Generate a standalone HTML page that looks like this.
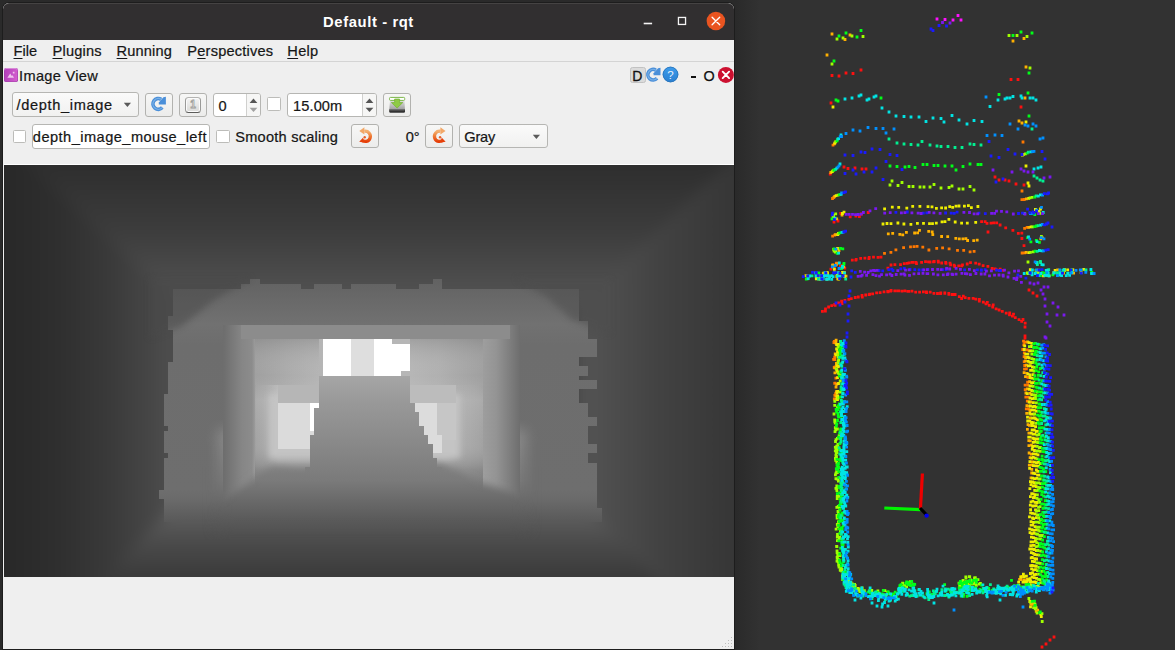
<!DOCTYPE html>
<html lang="en">
<head>
<meta charset="utf-8">
<title>Default - rqt</title>
<style>
*{box-sizing:border-box;margin:0;padding:0}
html,body{width:1175px;height:650px;overflow:hidden;background:#323232}
body{position:relative;font-family:"Liberation Sans",sans-serif;font-size:14.6px;color:#161616;-webkit-text-stroke:0.22px #161616}
.abs{position:absolute}
#desk{position:absolute;left:0;top:0;width:1175px;height:650px;background:#323232;overflow:hidden}
#shadow{position:absolute;left:0;top:0;width:760px;height:650px;background:linear-gradient(90deg,#2a2a2a 0,#2a2a2a 736px,#2d2d2d 745px,#323232 760px)}
#win{position:absolute;left:3px;top:3px;width:731px;height:646px;background:#efefef;border-radius:6px 6px 0 0;overflow:hidden;box-shadow:0 0 0 1px #1d1d1d}
#title{position:absolute;left:0;top:0;width:731px;height:37px;background:#312f30;border-top:1px solid #454343;border-radius:6px 6px 0 0}
#title .t{position:absolute;left:0;width:731px;top:9px;text-align:center;color:#fff;font-weight:bold;font-size:14.8px;line-height:18px;white-space:nowrap;letter-spacing:.6px;-webkit-text-stroke:0}
#menubar{position:absolute;left:0;top:37px;width:731px;height:22px;background:#efefef;border-bottom:1px solid #d4d4d4}
.mi{position:absolute;top:3px;line-height:17px;white-space:nowrap}
.mi u{text-decoration:underline;text-underline-offset:2px;text-decoration-thickness:1.4px}
.lbl{position:absolute;white-space:nowrap;line-height:18px}
.btn{position:absolute;border:1px solid #b2b2af;border-radius:3px;background:linear-gradient(#f7f7f6,#ececeb)}
.field{position:absolute;border:1px solid #b6b6b3;border-radius:3px;background:#fff}
.chk{position:absolute;width:13.6px;height:13.4px;border:1px solid #bcbcb9;border-radius:1.5px;background:#fff}
svg{position:absolute;display:block}
</style>
</head>
<body>
<div id="desk">
<div id="shadow"></div>
<div id="win">
 <div id="title"><div class="t">Default - rqt</div>
  <svg style="left:636px;top:6px" width="92" height="24" viewBox="0 0 92 24">
   <rect x="4.7" y="12.7" width="8.4" height="1.6" fill="#f4f4f4"/>
   <rect x="39.45" y="7.45" width="7.1" height="7" fill="none" stroke="#f4f4f4" stroke-width="1.3"/>
   <circle cx="76.9" cy="11" r="9.3" fill="#e95420"/>
   <path d="M73.1 7.2 L80.7 14.8 M80.7 7.2 L73.1 14.8" stroke="#fff" stroke-width="1.35" stroke-linecap="round"/>
  </svg>
 </div>
 <div id="menubar">
  <span class="mi" style="left:10.50px;letter-spacing:0.064px"><u>F</u>ile</span>
  <span class="mi" style="left:49.50px;letter-spacing:0.206px"><u>P</u>lugins</span>
  <span class="mi" style="left:113.60px;letter-spacing:0.149px"><u>R</u>unning</span>
  <span class="mi" style="left:184.30px;letter-spacing:0.206px">P<u>e</u>rspectives</span>
  <span class="mi" style="left:284.30px;letter-spacing:0.303px"><u>H</u>elp</span>
 </div>
 <!-- dock title -->
 <div class="abs" style="left:.7px;top:65.3px;width:14.6px;height:13.4px;border-radius:2.5px;background:linear-gradient(100deg,#b03cba,#c24fc4 50%,#d862d0);box-shadow:inset 0 1px 0 #d88ad8,inset 0 0 0 .6px #a040a8"></div>
 <svg style="left:1px;top:65px" width="14" height="14" viewBox="0 0 14 14"><path d="M3.4 9.8 L6.2 5.4 L7.8 8 L8.6 7.2 L10 9.8Z" fill="#efc4ee"/><rect x="8.8" y="3.8" width="1.7" height="1.7" fill="#efc4ee"/></svg>
 <span class="lbl" style="left:16.10px;top:64px;letter-spacing:0.305px">Image View</span>
 <!-- dock buttons -->
 <div class="abs" style="left:627.3px;top:64.3px;width:15.3px;height:15.4px;background:#dbdbdb;border:1px solid #c2c2c2;border-radius:2.5px"></div>
 <span class="lbl" style="left:629.2px;top:63.6px;font-size:14px;-webkit-text-stroke:.3px #111;color:#111">D</span>
 <svg style="left:641px;top:62.6px" width="17" height="17" viewBox="4 2 17.4 17.4"><path d="M16.2 6.3 A5.4 5.4 0 1 0 17.3 14.6" fill="none" stroke="#4a8fd9" stroke-width="3.7"/><path d="M16.2 6.3 A5.4 5.4 0 1 0 17.3 14.6" fill="none" stroke="#79b0e6" stroke-width="1.3"/><path d="M20.9 3.8 V11.4 H13.8 V9.4 L18.4 4.2 Z" fill="#4a8fd9"/></svg>
 <svg style="left:658.6px;top:63.4px" width="17" height="17" viewBox="0 0 17 17"><defs><linearGradient id="qg" x1="0" y1="0" x2="0" y2="1"><stop offset="0" stop-color="#3d9ceb"/><stop offset="1" stop-color="#2a80d2"/></linearGradient></defs><circle cx="8.5" cy="8.5" r="7.8" fill="url(#qg)"/><circle cx="8.5" cy="8.5" r="7.4" fill="none" stroke="#2c73b8" stroke-width=".8"/><text x="8.5" y="12.8" font-size="11.5" text-anchor="middle" fill="#e8f2fc" font-family="Liberation Sans, sans-serif">?</text></svg>
 <div class="abs" style="left:688.2px;top:72.9px;width:5.1px;height:2.1px;background:#111"></div>
 <span class="lbl" style="left:700.6px;top:63.7px;font-size:14.4px;color:#111;-webkit-text-stroke:.25px #111">O</span>
 <svg style="left:714px;top:63px" width="18" height="18" viewBox="0 0 18 18"><circle cx="8.9" cy="8.9" r="8" fill="#cc1030"/><path d="M5.7 5.7 L12.1 12.1 M12.1 5.7 L5.7 12.1" stroke="#fff" stroke-width="1.9" stroke-linecap="round"/></svg>
 <!-- row 1 -->
 <div class="field" style="left:9.2px;top:89px;width:126.6px;height:24.6px;background:linear-gradient(#fafafa,#f1f1f0)"></div>
 <span class="lbl" style="left:13.60px;top:92.6px;letter-spacing:0.654px">/depth_image</span>
 <svg style="left:120px;top:99px" width="9" height="6" viewBox="0 0 9 6"><path d="M.8 .8 L8 .8 L4.4 5Z" fill="#5a5a5a"/></svg>
 <div class="btn" style="left:142.2px;top:90px;width:27.6px;height:23.7px"></div>
 <svg style="left:142px;top:90px" width="28" height="24" viewBox="0 0 28 24"><defs><linearGradient id="rb" x1="0" y1="0" x2="0" y2="1"><stop offset="0" stop-color="#7db3e8"/><stop offset="1" stop-color="#3f86d2"/></linearGradient></defs><path d="M16.2 6.3 A5.4 5.4 0 1 0 17.3 14.6" fill="none" stroke="#4a8fd9" stroke-width="3.7"/><path d="M16.2 6.3 A5.4 5.4 0 1 0 17.3 14.6" fill="none" stroke="#79b0e6" stroke-width="1.3"/><path d="M20.9 3.8 V11.4 H13.8 V9.4 L18.4 4.2 Z" fill="#4a8fd9"/></svg>
 <div class="btn" style="left:176px;top:90px;width:27.6px;height:23.7px"></div>
 <div class="abs" style="left:182.2px;top:94.2px;width:15.8px;height:15.6px;border:1px solid #9a9a98;border-bottom-color:#5c5c5a;border-top-color:#b4b4b2;border-radius:3.5px;background:linear-gradient(#f4f4f4,#dadad8);box-shadow:inset 0 0 0 1px #fbfbfb"></div>
 <span class="lbl" style="left:187.3px;top:95.4px;font-size:10px;font-weight:bold;line-height:13px;color:#fff;-webkit-text-stroke:.8px #9c9c98">1</span>
 <div class="field" style="left:210.2px;top:89.8px;width:47.6px;height:24px"></div>
 <div class="abs" style="left:243.4px;top:90.8px;width:13.4px;height:22px;border-left:1px solid #d0d0ce;background:#f6f6f5;border-radius:0 2px 2px 0"></div>
 <svg style="left:245.5px;top:94px" width="9" height="16" viewBox="0 0 9 16"><path d="M.6 6 L4.5 1.6 L8.4 6Z" fill="#555"/><path d="M.6 10.7 L4.5 15 L8.4 10.7Z" fill="#a0a0a0"/></svg>
 <span class="lbl" style="left:215.60px;top:94px">0</span>
 <div class="chk" style="left:264px;top:94.3px"></div>
 <div class="field" style="left:284.2px;top:89.8px;width:89.4px;height:24px"></div>
 <div class="abs" style="left:359.4px;top:90.8px;width:13.2px;height:22px;border-left:1px solid #d0d0ce;background:#f6f6f5;border-radius:0 2px 2px 0"></div>
 <svg style="left:361.5px;top:94px" width="9" height="16" viewBox="0 0 9 16"><path d="M.6 6 L4.5 1.6 L8.4 6Z" fill="#555"/><path d="M.6 10.7 L4.5 15 L8.4 10.7Z" fill="#555"/></svg>
 <span class="lbl" style="left:290.00px;top:94px;letter-spacing:0.114px">15.00m</span>
 <div class="btn" style="left:380.2px;top:90px;width:27.5px;height:23.7px"></div>
 <svg style="left:380px;top:90px" width="28" height="24" viewBox="383 93 28 24"><defs><linearGradient id="sv" x1="0" y1="0" x2="0" y2="1"><stop offset="0" stop-color="#e2e2e2"/><stop offset="1" stop-color="#9c9c9c"/></linearGradient></defs><path d="M390 100.4 H404.4 L405 110 H389.2Z" fill="url(#sv)"/><rect x="389.5" y="97.4" width="15.2" height="3" rx="1" fill="#fff" stroke="#7ab648" stroke-width="1"/><path d="M394.6 99 H399.6 V102.6 H402.8 L397.1 108 L391.4 102.6 H394.6Z" fill="#8fca45" stroke="#74b033" stroke-width=".7"/><path d="M389.2 109.6 H405 V111.6 Q405 112.8 403.8 112.8 H390.4 Q389.2 112.8 389.2 111.6Z" fill="#333"/><rect x="389.6" y="109.6" width="15" height=".8" fill="#777"/></svg>
 <!-- row 2 -->
 <div class="chk" style="left:9.6px;top:126.6px"></div>
 <div class="field" style="left:29.1px;top:121.4px;width:177.8px;height:24.2px"></div>
 <span class="lbl" style="left:29.80px;top:124.6px;letter-spacing:0.468px">depth_image_mouse_left</span>
 <div class="chk" style="left:213.3px;top:126.7px"></div>
 <span class="lbl" style="left:232.30px;top:124.9px;letter-spacing:0.212px">Smooth scaling</span>
 <div class="btn" style="left:348.3px;top:121.4px;width:27.5px;height:23.3px"></div>
 <svg style="left:348.4px;top:121.4px" width="28" height="24" viewBox="0 0 28 24"><defs><linearGradient id="roL" x1="0" y1="0" x2="0" y2="1"><stop offset="0" stop-color="#f3b070"/><stop offset=".5" stop-color="#ee7a34"/><stop offset="1" stop-color="#e6400a"/></linearGradient></defs><path d="M13.4 7.3 A5.1 5.1 0 1 1 10.6 15.9" fill="none" stroke="url(#roL)" stroke-width="3.3"/><path d="M13.4 3.2 L13.4 10.6 L8.3 6.9 Z" fill="#f2a868"/><path d="M8.2 17.8 L12.2 13.6 L12.6 18.4 Z" fill="#e6400a"/><circle cx="13.7" cy="13.2" r="1.2" fill="#e8602a"/></svg>
 <span class="lbl" style="left:402.70px;top:124.9px;letter-spacing:-0.050px">0°</span>
 <div class="btn" style="left:422.4px;top:121.4px;width:27.5px;height:23.3px"></div>
 <svg style="left:422.5px;top:121.4px" width="28" height="24" viewBox="0 0 28 24"><g transform="translate(27.8,0) scale(-1,1)"><defs><linearGradient id="roR" x1="0" y1="0" x2="0" y2="1"><stop offset="0" stop-color="#f3b070"/><stop offset=".5" stop-color="#ee7a34"/><stop offset="1" stop-color="#e6400a"/></linearGradient></defs><path d="M13.4 7.3 A5.1 5.1 0 1 1 10.6 15.9" fill="none" stroke="url(#roR)" stroke-width="3.3"/><path d="M13.4 3.2 L13.4 10.6 L8.3 6.9 Z" fill="#f2a868"/><path d="M8.2 17.8 L12.2 13.6 L12.6 18.4 Z" fill="#e6400a"/><circle cx="13.7" cy="13.2" r="1.2" fill="#e8602a"/></g></svg>
 <div class="field" style="left:456.2px;top:120.7px;width:88.6px;height:24.6px;background:linear-gradient(#fafafa,#f1f1f0)"></div>
 <span class="lbl" style="left:461.30px;top:124.8px;letter-spacing:-0.206px">Gray</span>
 <svg style="left:529px;top:131px" width="9" height="6" viewBox="0 0 9 6"><path d="M.8 .8 L8 .8 L4.4 5Z" fill="#5a5a5a"/></svg>
 <!-- image area -->
 <div class="abs" style="left:1px;top:161px;width:730px;height:1px;background:#fff"></div>
 <svg style="left:1px;top:162px" width="730" height="412" viewBox="4 165 730 412" shape-rendering="crispEdges">
<defs>
<linearGradient id="gT" gradientUnits="userSpaceOnUse" x1="0" y1="165" x2="0" y2="290"><stop offset="0" stop-color="#2e2e2e"/><stop offset="0.52" stop-color="#3c3c3c"/><stop offset="1" stop-color="#505050"/></linearGradient>
<linearGradient id="gL" gradientUnits="userSpaceOnUse" x1="4" y1="0" x2="168" y2="0"><stop offset="0" stop-color="#282828"/><stop offset="0.341463" stop-color="#2f2f2f"/><stop offset="0.646341" stop-color="#3a3a3a"/><stop offset="0.890244" stop-color="#464646"/><stop offset="1" stop-color="#4d4d4d"/></linearGradient>
<linearGradient id="gR" gradientUnits="userSpaceOnUse" x1="592" y1="0" x2="734" y2="0"><stop offset="0" stop-color="#525252"/><stop offset="0.478873" stop-color="#424242"/><stop offset="1" stop-color="#363636"/></linearGradient>
<linearGradient id="gF" gradientUnits="userSpaceOnUse" x1="0" y1="376" x2="0" y2="577"><stop offset="0" stop-color="#a6a6a6"/><stop offset="0.139303" stop-color="#989898"/><stop offset="0.318408" stop-color="#8a8a8a"/><stop offset="0.522388" stop-color="#7a7a7a"/><stop offset="0.616915" stop-color="#6a6a6a"/><stop offset="0.716418" stop-color="#5a5a5a"/><stop offset="0.81592" stop-color="#4c4c4c"/><stop offset="1" stop-color="#3a3a3a"/></linearGradient>
<linearGradient id="gM" gradientUnits="userSpaceOnUse" x1="0" y1="280" x2="0" y2="540"><stop offset="0" stop-color="#626262"/><stop offset="0.0769231" stop-color="#696969"/><stop offset="0.169231" stop-color="#717171"/><stop offset="0.25" stop-color="#6d6d6d"/><stop offset="0.807692" stop-color="#6e6e6e"/><stop offset="0.846154" stop-color="#6a6a6a"/><stop offset="0.923077" stop-color="#5a5a5a"/><stop offset="1" stop-color="#4c4c4c"/></linearGradient>
<linearGradient id="gWL" gradientUnits="userSpaceOnUse" x1="224" y1="0" x2="320" y2="0"><stop offset="0" stop-color="#6e6e6e"/><stop offset="0.1875" stop-color="#868686"/><stop offset="0.291667" stop-color="#8c8c8c"/><stop offset="0.333333" stop-color="#a0a0a0"/><stop offset="0.4375" stop-color="#a8a8a8"/><stop offset="0.572917" stop-color="#bababa"/><stop offset="1" stop-color="#bababa"/></linearGradient>
<linearGradient id="gWR" gradientUnits="userSpaceOnUse" x1="412" y1="0" x2="520" y2="0"><stop offset="0" stop-color="#bebebe"/><stop offset="0.305556" stop-color="#bebebe"/><stop offset="0.407407" stop-color="#acacac"/><stop offset="0.537037" stop-color="#a6a6a6"/><stop offset="0.62963" stop-color="#a0a0a0"/><stop offset="0.777778" stop-color="#949494"/><stop offset="1" stop-color="#6e6e6e"/></linearGradient>
<linearGradient id="gVs" gradientUnits="userSpaceOnUse" x1="0" y1="339" x2="0" y2="490"><stop offset="0" stop-color="#787878" stop-opacity="0.35"/><stop offset="0.238411" stop-color="#c8c8c8" stop-opacity="0"/><stop offset="0.403974" stop-color="#d2d2d2" stop-opacity="0.25"/><stop offset="0.668874" stop-color="#c8c8c8" stop-opacity="0.1"/><stop offset="0.86755" stop-color="#6e6e6e" stop-opacity="0.45"/><stop offset="1" stop-color="#646464" stop-opacity="0.7"/></linearGradient>
<filter id="b6" color-interpolation-filters="sRGB" x="-10%" y="-10%" width="120%" height="120%"><feGaussianBlur stdDeviation="7"/></filter>
<filter id="b3" color-interpolation-filters="sRGB" x="-10%" y="-10%" width="120%" height="120%"><feGaussianBlur stdDeviation="3"/></filter>
<clipPath id="cp"><rect x="4" y="165" width="730" height="412"/></clipPath>
<filter id="b8" color-interpolation-filters="sRGB" x="-10%" y="-10%" width="120%" height="120%"><feGaussianBlur stdDeviation="7"/></filter>
<filter id="b4" color-interpolation-filters="sRGB" x="-10%" y="-10%" width="120%" height="120%"><feGaussianBlur stdDeviation="3.5"/></filter>
<mask id="mW" maskUnits="userSpaceOnUse" x="0" y="100" width="800" height="600"><polygon filter="url(#b4)" fill="#fff" points="100,200 660,200 660,540 600,530 523,496 501,488 477,481 443,463 306,467 272,466 257,475 246,484 224,498 160,530 100,540"/></mask>
<mask id="mF" maskUnits="userSpaceOnUse" x="0" y="100" width="800" height="600"><polygon filter="url(#b8)" fill="#fff" points="218,430 526,430 526,530 218,530"/></mask>
</defs>
<g clip-path="url(#cp)">
<rect x="4" y="165" width="730" height="412" fill="#3c3c3c"/>
<g filter="url(#b6)">
<polygon points="-60,84 820,75 575,309 185,308" fill="url(#gT)"/>
<polygon points="-60,84 185,308 185,494 -60,750" fill="url(#gL)"/>
<polygon points="820,75 575,309 575,494 820,750" fill="url(#gR)"/>
<polygon points="-60,750 185,494 575,494 820,750" fill="url(#gF)"/>
</g>
<polygon points="172.81,288.6 241.25,288.6 241.25,284.02 250.38,284.02 250.38,279.44 259.5,279.44 259.5,284.02 300.56,284.02 300.56,288.6 314.25,288.6 314.25,284.02 341.62,284.02 341.62,288.6 350.75,288.6 350.75,284.02 396.38,284.02 396.38,288.6 419.19,288.6 419.19,284.02 432.88,284.02 432.88,279.44 442,279.44 442,288.6 578.88,288.6 578.88,288.6 578.88,320.64 588,320.64 588,338.96 597.12,338.96 597.12,357.27 578.88,357.27 578.88,366.42 588,366.42 588,375.58 578.88,375.58 578.88,380.16 597.12,380.16 597.12,389.31 578.88,389.31 578.88,403.04 588,403.04 588,416.78 597.12,416.78 597.12,425.93 588,425.93 588,430.51 588,430.51 588,444.24 597.12,444.24 597.12,453.4 588,453.4 588,462.56 597.12,462.56 597.12,508.33 601.69,508.33 601.69,522.07 163.69,522.07 163.69,499.18 159.12,499.18 159.12,490.02 163.69,490.02 163.69,457.98 168.25,457.98 168.25,453.4 163.69,453.4 163.69,430.51 168.25,430.51 168.25,425.93 163.69,425.93 163.69,393.89 168.25,393.89 168.25,361.84 172.81,361.84 172.81,329.8 168.25,329.8 168.25,316.07 172.81,316.07 172.81,288.6" fill="url(#gM)"/>
<rect x="150" y="375.58" width="460.81" height="164.8" fill="url(#gF)" mask="url(#mF)"/>
<g mask="url(#mW)">
<g filter="url(#b3)" opacity=".55"><polygon points="150,278 252,278 214,300 182,326 150,338" fill="#4a4a4a"/><polygon points="515,278 610,278 610,334 572,320 548,298" fill="#4e4e4e"/></g>
<rect x="223" y="325.22" width="95.81" height="219.74" fill="url(#gWL)"/>
<rect x="410.06" y="325.22" width="109.5" height="219.74" fill="url(#gWR)"/>
<rect x="241.25" y="325.22" width="269.19" height="13.74" fill="#8c8c8c"/>
<rect x="254.94" y="338.96" width="228.12" height="45.77" fill="#a8a8a8"/>
<linearGradient id="gC3" gradientUnits="userSpaceOnUse" x1="256" y1="0" x2="481" y2="0"><stop offset="0" stop-color="#a0a0a0"/><stop offset="0.151111" stop-color="#acacac"/><stop offset="0.306667" stop-color="#b6b6b6"/><stop offset="0.693333" stop-color="#b6b6b6"/><stop offset="0.817778" stop-color="#b0b0b0"/><stop offset="1" stop-color="#a0a0a0"/></linearGradient>
<rect x="254.94" y="338.96" width="228.12" height="45.77" fill="url(#gC3)"/>
<rect x="254.94" y="338.96" width="63.87" height="206" fill="url(#gVs)"/>
<rect x="410.06" y="338.96" width="73" height="206" fill="url(#gVs)"/>
</g>
<g filter="url(#b3)">
<rect x="268.62" y="393.89" width="59.32" height="64.09" fill="#c4c4c4"/>
<rect x="405.5" y="393.89" width="54.75" height="64.09" fill="#c4c4c4"/>
</g>
<rect x="277.75" y="384.73" width="41.06" height="18.31" fill="#b6b6b6"/>
<rect x="410.06" y="384.73" width="45.63" height="18.31" fill="#bcbcbc"/>
<rect x="277.75" y="403.04" width="41.06" height="45.78" fill="#dbdbdb"/>
<rect x="309.69" y="403.04" width="9.12" height="27.47" fill="#fff"/>
<rect x="309.69" y="435.09" width="4.56" height="4.58" fill="#fff"/>
<rect x="437.44" y="403.04" width="18.25" height="36.63" fill="#c6c6c6"/>
<rect x="410.06" y="403.04" width="27.38" height="50.36" fill="#dcdcdc"/>
<rect x="437.44" y="435.09" width="4.56" height="18.31" fill="#dcdcdc"/>
<polygon points="318.81,375.58 410.06,375.58 410.06,403.04 414.62,403.04 414.62,412.2 419.19,412.2 419.19,425.93 423.75,425.93 423.75,435.09 428.31,435.09 428.31,444.24 432.88,444.24 432.88,457.98 437.44,457.98 437.44,467.13 442,467.13 442,480.87 305.12,480.87 305.12,467.13 309.69,467.13 309.69,435.09 314.25,435.09 314.25,407.62 318.81,407.62" fill="url(#gF)"/>
<polygon points="323.38,338.96 391.81,338.96 391.81,343.53 410.06,343.53 410.06,352.69 410.06,352.69 410.06,371 400.94,371 400.94,375.58 323.38,375.58" fill="#fff"/>
<rect x="350.75" y="338.96" width="22.81" height="36.62" fill="#dedede"/>
</g></svg>
 <!-- size grip -->
 <svg style="left:718px;top:633px" width="13" height="13" viewBox="0 0 13 13"><g fill="#bdbdbd"><rect x="10" y="1" width="1" height="1"/><rect x="7" y="4" width="1" height="1"/><rect x="10" y="4" width="1" height="1"/><rect x="4" y="7" width="1" height="1"/><rect x="7" y="7" width="1" height="1"/><rect x="10" y="7" width="1" height="1"/><rect x="1" y="10" width="1" height="1"/><rect x="4" y="10" width="1" height="1"/><rect x="7" y="10" width="1" height="1"/><rect x="10" y="10" width="1" height="1"/></g></svg>
</div>
<svg style="left:760px;top:0" width="415" height="650" viewBox="760 0 415 650">
<path fill="#ff1010" d="M830.6 74.1h2.8v2.8h-2.8zM837.6 74.6h2.8v2.8h-2.8zM844.6 71.6h2.8v2.8h-2.8zM851.6 72.1h2.8v2.8h-2.8zM859.6 68.6h2.8v2.8h-2.8zM1009.6 78.1h2.8v2.8h-2.8zM1016.6 78.1h2.8v2.8h-2.8zM829.6 101.6h2.8v2.8h-2.8zM1019.6 105.6h2.8v2.8h-2.8zM842.6 165.6h2.8v2.8h-2.8zM846.6 167.1h2.8v2.8h-2.8zM853.6 166.6h2.8v2.8h-2.8zM860.6 167.6h2.8v2.8h-2.8zM864.6 167.6h2.8v2.8h-2.8zM828.8 172.7h2.8v2.8h-2.8zM839.3 211.9h2.8v2.8h-2.8zM841.5 265.8h2.8v2.8h-2.8zM841.1 264.1h2.8v2.8h-2.8zM993.6 175.6h2.8v2.8h-2.8zM997.6 178.6h2.8v2.8h-2.8zM1003.6 178.6h2.8v2.8h-2.8zM1007.6 179.6h2.8v2.8h-2.8zM1014.6 182.6h2.8v2.8h-2.8zM1022.6 183.6h2.8v2.8h-2.8zM848.8 215.5h2.8v2.8h-2.8zM854.5 214.8h2.8v2.8h-2.8zM858.0 215.3h2.8v2.8h-2.8zM860.1 212.6h2.8v2.8h-2.8zM866.8 211.1h2.8v2.8h-2.8zM832.6 220.6h2.8v2.8h-2.8zM836.6 219.6h2.8v2.8h-2.8zM850.9 258.7h2.8v2.8h-2.8zM854.4 258.7h2.8v2.8h-2.8zM854.8 258.0h2.8v2.8h-2.8zM859.3 257.0h2.8v2.8h-2.8zM863.5 256.8h2.8v2.8h-2.8zM867.5 257.3h2.8v2.8h-2.8zM867.8 256.1h2.8v2.8h-2.8zM872.1 255.7h2.8v2.8h-2.8zM876.6 256.0h2.8v2.8h-2.8zM879.6 255.8h2.8v2.8h-2.8zM886.5 266.8h2.8v2.8h-2.8zM889.6 263.6h2.8v2.8h-2.8zM893.5 263.2h2.8v2.8h-2.8zM899.1 263.2h2.8v2.8h-2.8zM902.8 262.3h2.8v2.8h-2.8zM905.8 261.9h2.8v2.8h-2.8zM907.6 261.4h2.8v2.8h-2.8zM910.6 260.9h2.8v2.8h-2.8zM911.6 261.0h2.8v2.8h-2.8zM914.6 261.0h2.8v2.8h-2.8zM915.1 262.3h2.8v2.8h-2.8zM920.2 260.9h2.8v2.8h-2.8zM924.1 260.3h2.8v2.8h-2.8zM927.1 260.4h2.8v2.8h-2.8zM928.6 260.6h2.8v2.8h-2.8zM932.1 260.5h2.8v2.8h-2.8zM932.8 260.1h2.8v2.8h-2.8zM936.8 259.8h2.8v2.8h-2.8zM937.0 260.8h2.8v2.8h-2.8zM940.3 261.6h2.8v2.8h-2.8zM944.3 261.1h2.8v2.8h-2.8zM944.6 262.0h2.8v2.8h-2.8zM948.6 261.7h2.8v2.8h-2.8zM949.2 263.4h2.8v2.8h-2.8zM952.7 263.7h2.8v2.8h-2.8zM953.4 265.1h2.8v2.8h-2.8zM957.3 264.5h2.8v2.8h-2.8zM960.3 264.5h2.8v2.8h-2.8zM961.1 263.5h2.8v2.8h-2.8zM965.8 262.6h2.8v2.8h-2.8zM969.1 261.3h2.8v2.8h-2.8zM974.3 261.8h2.8v2.8h-2.8zM977.8 262.7h2.8v2.8h-2.8zM981.7 264.2h2.8v2.8h-2.8zM986.5 264.9h2.8v2.8h-2.8zM990.7 267.1h2.8v2.8h-2.8zM993.7 267.4h2.8v2.8h-2.8zM994.8 268.2h2.8v2.8h-2.8zM998.8 267.8h2.8v2.8h-2.8zM998.1 269.1h2.8v2.8h-2.8zM1001.6 268.9h2.8v2.8h-2.8zM980.2 220.2h2.8v2.8h-2.8zM983.7 220.2h2.8v2.8h-2.8zM985.6 222.0h2.8v2.8h-2.8zM989.6 221.8h2.8v2.8h-2.8zM992.3 221.4h2.8v2.8h-2.8zM995.3 221.5h2.8v2.8h-2.8zM998.7 223.6h2.8v2.8h-2.8zM1004.3 226.4h2.8v2.8h-2.8zM1011.5 228.9h2.8v2.8h-2.8zM1016.9 232.0h2.8v2.8h-2.8zM1020.4 231.7h2.8v2.8h-2.8zM1020.5 237.1h2.8v2.8h-2.8zM1022.6 244.2h2.8v2.8h-2.8zM986.6 230.6h2.8v2.8h-2.8zM839.0 264.6h2.8v2.8h-2.8zM833.2 267.0h2.8v2.8h-2.8zM829.5 267.7h2.8v2.8h-2.8zM843.4 266.7h2.8v2.8h-2.8zM821.0 310.0h2.8v2.8h-2.8zM824.0 309.6h2.8v2.8h-2.8zM824.1 307.4h2.8v2.8h-2.8zM827.2 305.6h2.8v2.8h-2.8zM830.3 304.3h2.8v2.8h-2.8zM833.8 303.9h2.8v2.8h-2.8zM833.3 303.1h2.8v2.8h-2.8zM837.1 301.5h2.8v2.8h-2.8zM840.6 302.1h2.8v2.8h-2.8zM840.2 299.8h2.8v2.8h-2.8zM843.5 299.1h2.8v2.8h-2.8zM847.4 298.0h2.8v2.8h-2.8zM849.9 297.2h2.8v2.8h-2.8zM853.8 296.1h2.8v2.8h-2.8zM856.9 295.6h2.8v2.8h-2.8zM860.9 295.7h2.8v2.8h-2.8zM860.6 293.9h2.8v2.8h-2.8zM864.3 293.6h2.8v2.8h-2.8zM867.8 293.2h2.8v2.8h-2.8zM868.3 292.8h2.8v2.8h-2.8zM871.3 292.4h2.8v2.8h-2.8zM875.2 291.5h2.8v2.8h-2.8zM878.7 291.3h2.8v2.8h-2.8zM882.6 290.5h2.8v2.8h-2.8zM886.6 290.5h2.8v2.8h-2.8zM886.3 290.0h2.8v2.8h-2.8zM889.3 289.7h2.8v2.8h-2.8zM889.7 289.1h2.8v2.8h-2.8zM893.4 289.5h2.8v2.8h-2.8zM897.4 289.5h2.8v2.8h-2.8zM896.3 289.5h2.8v2.8h-2.8zM900.6 289.8h2.8v2.8h-2.8zM903.5 289.4h2.8v2.8h-2.8zM906.5 290.0h2.8v2.8h-2.8zM907.4 290.0h2.8v2.8h-2.8zM910.6 289.7h2.8v2.8h-2.8zM914.3 290.8h2.8v2.8h-2.8zM918.2 290.8h2.8v2.8h-2.8zM922.0 290.5h2.8v2.8h-2.8zM925.0 290.5h2.8v2.8h-2.8zM925.2 291.3h2.8v2.8h-2.8zM928.8 290.8h2.8v2.8h-2.8zM932.5 291.9h2.8v2.8h-2.8zM936.1 292.1h2.8v2.8h-2.8zM939.1 292.1h2.8v2.8h-2.8zM939.4 291.6h2.8v2.8h-2.8zM943.4 291.5h2.8v2.8h-2.8zM943.4 291.9h2.8v2.8h-2.8zM947.4 291.9h2.8v2.8h-2.8zM947.5 293.0h2.8v2.8h-2.8zM951.0 293.0h2.8v2.8h-2.8zM950.8 293.3h2.8v2.8h-2.8zM953.7 293.1h2.8v2.8h-2.8zM957.9 295.2h2.8v2.8h-2.8zM961.9 294.7h2.8v2.8h-2.8zM960.2 297.1h2.8v2.8h-2.8zM963.8 296.2h2.8v2.8h-2.8zM967.5 296.9h2.8v2.8h-2.8zM971.7 296.9h2.8v2.8h-2.8zM974.5 297.7h2.8v2.8h-2.8zM978.0 298.0h2.8v2.8h-2.8zM977.9 299.7h2.8v2.8h-2.8zM981.9 300.8h2.8v2.8h-2.8zM985.9 300.9h2.8v2.8h-2.8zM984.6 302.4h2.8v2.8h-2.8zM987.8 303.9h2.8v2.8h-2.8zM991.8 303.4h2.8v2.8h-2.8zM991.3 305.6h2.8v2.8h-2.8zM994.7 307.5h2.8v2.8h-2.8zM997.7 308.6h2.8v2.8h-2.8zM1000.9 309.9h2.8v2.8h-2.8zM1004.8 311.8h2.8v2.8h-2.8zM1008.3 311.4h2.8v2.8h-2.8zM1008.1 313.4h2.8v2.8h-2.8zM1012.1 312.8h2.8v2.8h-2.8zM1011.0 314.8h2.8v2.8h-2.8zM1013.9 316.3h2.8v2.8h-2.8zM1017.6 318.3h2.8v2.8h-2.8zM1021.6 318.1h2.8v2.8h-2.8zM1020.3 319.9h2.8v2.8h-2.8zM1023.8 321.7h2.8v2.8h-2.8zM1023.6 325.6h2.8v2.8h-2.8zM1023.6 334.6h2.8v2.8h-2.8zM1027.6 288.6h2.8v2.8h-2.8zM1031.6 291.6h2.8v2.8h-2.8zM1035.6 294.6h2.8v2.8h-2.8zM1023.6 336.6h2.8v2.8h-2.8zM1040.6 645.6h2.8v2.8h-2.8zM1044.6 642.6h2.8v2.8h-2.8zM1048.6 638.6h2.8v2.8h-2.8zM1052.6 635.6h2.8v2.8h-2.8z"/>
<path fill="#ff7800" d="M831.6 143.7h2.8v2.8h-2.8zM831.1 197.1h2.8v2.8h-2.8zM832.4 196.1h2.8v2.8h-2.8zM831.2 234.7h2.8v2.8h-2.8zM833.3 233.8h2.8v2.8h-2.8zM831.6 264.4h2.8v2.8h-2.8zM835.2 261.7h2.8v2.8h-2.8zM1021.6 140.6h2.8v2.8h-2.8zM1020.6 189.6h2.8v2.8h-2.8zM1020.5 198.2h2.8v2.8h-2.8zM1022.8 198.1h2.8v2.8h-2.8zM1023.2 227.0h2.8v2.8h-2.8zM1025.7 225.9h2.8v2.8h-2.8zM1020.7 251.6h2.8v2.8h-2.8zM1023.1 251.4h2.8v2.8h-2.8zM883.1 251.9h2.8v2.8h-2.8zM889.5 250.9h2.8v2.8h-2.8zM894.5 248.5h2.8v2.8h-2.8zM902.2 246.3h2.8v2.8h-2.8zM909.1 245.4h2.8v2.8h-2.8zM912.6 245.2h2.8v2.8h-2.8zM915.7 245.0h2.8v2.8h-2.8zM921.4 245.7h2.8v2.8h-2.8zM927.5 248.6h2.8v2.8h-2.8zM935.3 247.0h2.8v2.8h-2.8zM941.2 246.4h2.8v2.8h-2.8zM947.7 247.5h2.8v2.8h-2.8zM956.1 248.9h2.8v2.8h-2.8zM962.3 249.0h2.8v2.8h-2.8zM968.7 250.5h2.8v2.8h-2.8zM972.7 250.0h2.8v2.8h-2.8zM834.9 262.3h2.8v2.8h-2.8zM838.5 267.1h2.8v2.8h-2.8zM832.9 340.0h2.8v2.8h-2.8zM834.1 340.5h2.8v2.8h-2.8zM832.5 341.1h2.8v2.8h-2.8zM833.3 355.7h2.8v2.8h-2.8zM832.2 357.9h2.8v2.8h-2.8zM833.3 358.3h2.8v2.8h-2.8zM835.0 363.0h2.8v2.8h-2.8zM833.7 365.6h2.8v2.8h-2.8zM832.8 366.0h2.8v2.8h-2.8zM834.5 376.7h2.8v2.8h-2.8zM833.7 381.7h2.8v2.8h-2.8zM833.3 381.9h2.8v2.8h-2.8zM834.2 392.2h2.8v2.8h-2.8zM833.4 393.9h2.8v2.8h-2.8zM832.9 397.6h2.8v2.8h-2.8zM1022.1 339.8h2.8v2.8h-2.8zM1023.3 340.8h2.8v2.8h-2.8zM1022.4 343.4h2.8v2.8h-2.8zM1021.4 348.1h2.8v2.8h-2.8zM1025.8 348.5h2.8v2.8h-2.8zM1022.9 351.6h2.8v2.8h-2.8zM1022.7 355.2h2.8v2.8h-2.8zM1022.8 360.2h2.8v2.8h-2.8zM1023.3 364.1h2.8v2.8h-2.8zM1023.1 367.7h2.8v2.8h-2.8zM1025.0 367.5h2.8v2.8h-2.8zM1026.5 376.0h2.8v2.8h-2.8zM1026.2 380.7h2.8v2.8h-2.8zM1023.7 383.8h2.8v2.8h-2.8zM1026.6 383.7h2.8v2.8h-2.8zM1023.8 388.3h2.8v2.8h-2.8zM1024.4 395.8h2.8v2.8h-2.8zM1026.8 395.8h2.8v2.8h-2.8zM1025.9 399.7h2.8v2.8h-2.8zM1024.9 407.5h2.8v2.8h-2.8zM1027.6 407.8h2.8v2.8h-2.8z"/>
<path fill="#ffb000" d="M830.6 32.6h2.8v2.8h-2.8zM848.6 33.6h2.8v2.8h-2.8zM843.6 38.1h2.8v2.8h-2.8zM1011.6 39.6h2.8v2.8h-2.8zM1022.6 37.1h2.8v2.8h-2.8zM825.6 53.6h2.8v2.8h-2.8zM1024.6 65.6h2.8v2.8h-2.8zM1023.6 96.6h2.8v2.8h-2.8zM833.0 142.4h2.8v2.8h-2.8zM829.4 171.1h2.8v2.8h-2.8zM833.3 195.0h2.8v2.8h-2.8zM834.1 233.3h2.8v2.8h-2.8zM835.3 217.4h2.8v2.8h-2.8zM840.6 213.7h2.8v2.8h-2.8zM837.6 249.1h2.8v2.8h-2.8zM842.4 265.5h2.8v2.8h-2.8zM831.4 263.5h2.8v2.8h-2.8zM839.4 267.0h2.8v2.8h-2.8zM1017.6 119.6h2.8v2.8h-2.8zM1020.6 121.6h2.8v2.8h-2.8zM1025.0 197.4h2.8v2.8h-2.8zM1027.4 226.0h2.8v2.8h-2.8zM1041.0 236.4h2.8v2.8h-2.8zM1039.4 237.5h2.8v2.8h-2.8zM1024.7 251.0h2.8v2.8h-2.8zM886.9 232.5h2.8v2.8h-2.8zM891.3 232.0h2.8v2.8h-2.8zM898.4 233.0h2.8v2.8h-2.8zM901.4 233.4h2.8v2.8h-2.8zM905.0 230.9h2.8v2.8h-2.8zM913.2 231.6h2.8v2.8h-2.8zM916.2 231.5h2.8v2.8h-2.8zM918.1 229.0h2.8v2.8h-2.8zM927.3 229.9h2.8v2.8h-2.8zM930.8 230.5h2.8v2.8h-2.8zM931.4 233.3h2.8v2.8h-2.8zM940.2 235.1h2.8v2.8h-2.8zM946.3 235.3h2.8v2.8h-2.8zM954.4 236.9h2.8v2.8h-2.8zM957.9 237.4h2.8v2.8h-2.8zM961.5 237.4h2.8v2.8h-2.8zM964.5 237.3h2.8v2.8h-2.8zM966.2 239.1h2.8v2.8h-2.8zM972.3 239.3h2.8v2.8h-2.8zM975.8 238.7h2.8v2.8h-2.8zM843.0 271.1h2.8v2.8h-2.8zM821.9 271.7h2.8v2.8h-2.8zM844.6 274.8h2.8v2.8h-2.8zM835.4 275.1h2.8v2.8h-2.8zM804.5 274.3h2.8v2.8h-2.8zM817.8 277.6h2.8v2.8h-2.8zM836.3 277.5h2.8v2.8h-2.8zM834.9 263.4h2.8v2.8h-2.8zM831.1 263.9h2.8v2.8h-2.8zM1056.2 268.4h2.8v2.8h-2.8zM1071.6 268.5h2.8v2.8h-2.8zM1036.9 268.7h2.8v2.8h-2.8zM1062.2 271.7h2.8v2.8h-2.8zM1052.4 271.2h2.8v2.8h-2.8zM1072.2 271.7h2.8v2.8h-2.8zM1060.1 271.4h2.8v2.8h-2.8zM834.7 338.8h2.8v2.8h-2.8zM834.5 341.6h2.8v2.8h-2.8zM836.3 350.3h2.8v2.8h-2.8zM833.8 352.6h2.8v2.8h-2.8zM835.0 362.0h2.8v2.8h-2.8zM834.8 367.7h2.8v2.8h-2.8zM833.3 366.5h2.8v2.8h-2.8zM833.5 371.4h2.8v2.8h-2.8zM835.4 382.8h2.8v2.8h-2.8zM834.6 385.6h2.8v2.8h-2.8zM834.9 390.2h2.8v2.8h-2.8zM835.8 390.0h2.8v2.8h-2.8zM834.6 394.8h2.8v2.8h-2.8zM834.8 398.0h2.8v2.8h-2.8zM1026.1 340.6h2.8v2.8h-2.8zM1027.8 349.5h2.8v2.8h-2.8zM1024.2 356.1h2.8v2.8h-2.8zM1024.1 359.4h2.8v2.8h-2.8zM1025.0 363.8h2.8v2.8h-2.8zM1022.7 371.2h2.8v2.8h-2.8zM1025.6 371.9h2.8v2.8h-2.8zM1024.1 375.3h2.8v2.8h-2.8zM1028.2 380.2h2.8v2.8h-2.8zM1025.9 387.4h2.8v2.8h-2.8zM1024.5 391.6h2.8v2.8h-2.8zM1028.6 391.9h2.8v2.8h-2.8zM1029.2 400.6h2.8v2.8h-2.8zM1025.5 404.2h2.8v2.8h-2.8zM1027.2 404.7h2.8v2.8h-2.8zM1028.6 409.1h2.8v2.8h-2.8zM1025.3 412.0h2.8v2.8h-2.8zM1028.8 416.6h2.8v2.8h-2.8zM1026.6 423.3h2.8v2.8h-2.8zM1028.0 424.0h2.8v2.8h-2.8zM1026.0 428.0h2.8v2.8h-2.8zM1027.5 431.8h2.8v2.8h-2.8zM1027.4 439.2h2.8v2.8h-2.8zM1028.9 439.4h2.8v2.8h-2.8zM1027.5 444.3h2.8v2.8h-2.8zM1030.0 443.8h2.8v2.8h-2.8zM1027.7 451.6h2.8v2.8h-2.8zM1029.9 452.8h2.8v2.8h-2.8zM1028.7 456.2h2.8v2.8h-2.8zM1030.8 460.5h2.8v2.8h-2.8zM1027.9 463.7h2.8v2.8h-2.8zM1030.5 463.7h2.8v2.8h-2.8zM1030.4 468.0h2.8v2.8h-2.8zM1030.3 471.6h2.8v2.8h-2.8zM1029.6 476.4h2.8v2.8h-2.8zM1028.0 578.6h2.8v2.8h-2.8zM1019.7 578.2h2.8v2.8h-2.8zM1024.7 580.4h2.8v2.8h-2.8zM1018.2 577.9h2.8v2.8h-2.8zM1021.2 574.9h2.8v2.8h-2.8zM1021.5 575.2h2.8v2.8h-2.8zM1022.8 578.9h2.8v2.8h-2.8zM1025.7 577.7h2.8v2.8h-2.8zM1019.7 575.5h2.8v2.8h-2.8zM1031.0 603.0h2.8v2.8h-2.8zM1032.7 601.5h2.8v2.8h-2.8zM1034.8 609.9h2.8v2.8h-2.8zM1036.3 608.8h2.8v2.8h-2.8zM1030.7 600.5h2.8v2.8h-2.8zM1029.5 602.7h2.8v2.8h-2.8z"/>
<path fill="#eeee00" d="M831.6 105.6h2.8v2.8h-2.8zM833.6 141.4h2.8v2.8h-2.8zM830.9 170.2h2.8v2.8h-2.8zM834.7 194.2h2.8v2.8h-2.8zM836.4 233.2h2.8v2.8h-2.8zM842.6 210.8h2.8v2.8h-2.8zM832.1 215.3h2.8v2.8h-2.8zM841.0 212.1h2.8v2.8h-2.8zM832.3 247.9h2.8v2.8h-2.8zM836.1 247.0h2.8v2.8h-2.8zM834.4 249.8h2.8v2.8h-2.8zM1024.6 120.6h2.8v2.8h-2.8zM1021.0 153.8h2.8v2.8h-2.8zM1022.3 153.0h2.8v2.8h-2.8zM1024.6 164.6h2.8v2.8h-2.8zM1026.6 181.6h2.8v2.8h-2.8zM1027.6 184.6h2.8v2.8h-2.8zM1027.3 197.0h2.8v2.8h-2.8zM1034.0 208.1h2.8v2.8h-2.8zM1039.1 207.6h2.8v2.8h-2.8zM1037.7 209.9h2.8v2.8h-2.8zM1029.7 225.4h2.8v2.8h-2.8zM1027.4 251.3h2.8v2.8h-2.8zM883.2 207.5h2.8v2.8h-2.8zM890.9 205.8h2.8v2.8h-2.8zM897.3 206.0h2.8v2.8h-2.8zM905.4 206.7h2.8v2.8h-2.8zM911.3 204.9h2.8v2.8h-2.8zM918.5 205.0h2.8v2.8h-2.8zM926.6 205.2h2.8v2.8h-2.8zM930.6 205.4h2.8v2.8h-2.8zM935.0 206.9h2.8v2.8h-2.8zM940.2 206.4h2.8v2.8h-2.8zM944.2 206.6h2.8v2.8h-2.8zM948.3 205.3h2.8v2.8h-2.8zM951.3 205.9h2.8v2.8h-2.8zM954.6 204.8h2.8v2.8h-2.8zM957.6 204.6h2.8v2.8h-2.8zM963.0 204.8h2.8v2.8h-2.8zM967.0 204.3h2.8v2.8h-2.8zM970.0 206.2h2.8v2.8h-2.8zM976.5 205.1h2.8v2.8h-2.8zM881.6 222.6h2.8v2.8h-2.8zM885.6 222.1h2.8v2.8h-2.8zM889.6 222.3h2.8v2.8h-2.8zM896.5 221.6h2.8v2.8h-2.8zM902.5 222.6h2.8v2.8h-2.8zM909.5 222.9h2.8v2.8h-2.8zM916.0 222.0h2.8v2.8h-2.8zM922.1 221.9h2.8v2.8h-2.8zM928.1 222.3h2.8v2.8h-2.8zM931.1 222.2h2.8v2.8h-2.8zM934.9 221.7h2.8v2.8h-2.8zM940.6 220.5h2.8v2.8h-2.8zM943.6 220.2h2.8v2.8h-2.8zM947.5 218.0h2.8v2.8h-2.8zM953.8 220.6h2.8v2.8h-2.8zM960.2 221.8h2.8v2.8h-2.8zM965.9 221.7h2.8v2.8h-2.8zM974.3 221.0h2.8v2.8h-2.8zM826.1 272.1h2.8v2.8h-2.8zM825.8 271.1h2.8v2.8h-2.8zM833.5 271.3h2.8v2.8h-2.8zM841.1 271.1h2.8v2.8h-2.8zM817.2 274.6h2.8v2.8h-2.8zM843.3 275.2h2.8v2.8h-2.8zM820.2 274.2h2.8v2.8h-2.8zM843.3 274.6h2.8v2.8h-2.8zM835.9 274.1h2.8v2.8h-2.8zM815.0 277.1h2.8v2.8h-2.8zM814.9 277.4h2.8v2.8h-2.8zM825.7 277.7h2.8v2.8h-2.8zM837.3 277.8h2.8v2.8h-2.8zM819.2 277.7h2.8v2.8h-2.8zM832.9 268.0h2.8v2.8h-2.8zM1053.7 268.9h2.8v2.8h-2.8zM1082.3 268.0h2.8v2.8h-2.8zM1071.0 268.5h2.8v2.8h-2.8zM1063.1 268.6h2.8v2.8h-2.8zM1066.3 268.4h2.8v2.8h-2.8zM1028.9 268.2h2.8v2.8h-2.8zM1079.7 271.2h2.8v2.8h-2.8zM1027.5 272.0h2.8v2.8h-2.8zM1042.1 274.4h2.8v2.8h-2.8zM835.2 343.3h2.8v2.8h-2.8zM837.0 342.9h2.8v2.8h-2.8zM835.2 347.6h2.8v2.8h-2.8zM836.2 350.8h2.8v2.8h-2.8zM836.6 351.3h2.8v2.8h-2.8zM836.4 352.3h2.8v2.8h-2.8zM834.6 353.4h2.8v2.8h-2.8zM836.7 365.5h2.8v2.8h-2.8zM835.5 364.2h2.8v2.8h-2.8zM837.3 364.8h2.8v2.8h-2.8zM835.5 369.0h2.8v2.8h-2.8zM836.1 370.5h2.8v2.8h-2.8zM836.1 376.2h2.8v2.8h-2.8zM837.1 382.1h2.8v2.8h-2.8zM836.2 390.0h2.8v2.8h-2.8zM835.7 391.7h2.8v2.8h-2.8zM836.2 394.7h2.8v2.8h-2.8zM835.8 395.9h2.8v2.8h-2.8zM836.1 398.3h2.8v2.8h-2.8zM1027.7 341.3h2.8v2.8h-2.8zM1030.4 341.9h2.8v2.8h-2.8zM1023.3 344.4h2.8v2.8h-2.8zM1030.0 345.1h2.8v2.8h-2.8zM1023.0 348.1h2.8v2.8h-2.8zM1029.2 349.4h2.8v2.8h-2.8zM1024.3 352.8h2.8v2.8h-2.8zM1026.5 352.8h2.8v2.8h-2.8zM1026.5 355.9h2.8v2.8h-2.8zM1027.9 356.5h2.8v2.8h-2.8zM1026.8 359.9h2.8v2.8h-2.8zM1028.5 361.0h2.8v2.8h-2.8zM1030.5 361.1h2.8v2.8h-2.8zM1027.0 364.4h2.8v2.8h-2.8zM1028.9 364.3h2.8v2.8h-2.8zM1031.0 365.6h2.8v2.8h-2.8zM1029.2 368.9h2.8v2.8h-2.8zM1030.7 369.0h2.8v2.8h-2.8zM1026.7 372.7h2.8v2.8h-2.8zM1028.6 373.5h2.8v2.8h-2.8zM1031.7 373.3h2.8v2.8h-2.8zM1028.7 376.3h2.8v2.8h-2.8zM1030.5 376.7h2.8v2.8h-2.8zM1030.2 381.2h2.8v2.8h-2.8zM1032.4 381.3h2.8v2.8h-2.8zM1028.6 384.6h2.8v2.8h-2.8zM1030.1 384.5h2.8v2.8h-2.8zM1027.9 388.0h2.8v2.8h-2.8zM1030.4 389.1h2.8v2.8h-2.8zM1025.9 392.3h2.8v2.8h-2.8zM1030.3 393.2h2.8v2.8h-2.8zM1028.6 396.6h2.8v2.8h-2.8zM1031.0 397.2h2.8v2.8h-2.8zM1033.0 396.7h2.8v2.8h-2.8zM1027.7 400.6h2.8v2.8h-2.8zM1032.0 401.3h2.8v2.8h-2.8zM1029.0 404.6h2.8v2.8h-2.8zM1031.7 405.3h2.8v2.8h-2.8zM1033.1 405.0h2.8v2.8h-2.8zM1035.1 405.8h2.8v2.8h-2.8zM1030.5 408.5h2.8v2.8h-2.8zM1032.9 408.8h2.8v2.8h-2.8zM1035.1 409.7h2.8v2.8h-2.8zM1028.3 412.0h2.8v2.8h-2.8zM1029.4 412.7h2.8v2.8h-2.8zM1031.9 412.8h2.8v2.8h-2.8zM1026.1 415.7h2.8v2.8h-2.8zM1031.1 416.8h2.8v2.8h-2.8zM1033.0 416.6h2.8v2.8h-2.8zM1034.4 417.4h2.8v2.8h-2.8zM1036.1 418.4h2.8v2.8h-2.8zM1026.3 419.6h2.8v2.8h-2.8zM1028.4 419.7h2.8v2.8h-2.8zM1030.1 421.1h2.8v2.8h-2.8zM1031.9 421.2h2.8v2.8h-2.8zM1030.4 424.1h2.8v2.8h-2.8zM1031.8 424.2h2.8v2.8h-2.8zM1034.2 425.3h2.8v2.8h-2.8zM1030.7 428.4h2.8v2.8h-2.8zM1032.9 428.6h2.8v2.8h-2.8zM1035.0 429.9h2.8v2.8h-2.8zM1035.9 430.0h2.8v2.8h-2.8zM1029.9 431.8h2.8v2.8h-2.8zM1031.7 432.8h2.8v2.8h-2.8zM1033.5 432.7h2.8v2.8h-2.8zM1027.3 435.7h2.8v2.8h-2.8zM1028.7 435.8h2.8v2.8h-2.8zM1031.6 436.8h2.8v2.8h-2.8zM1032.6 437.2h2.8v2.8h-2.8zM1034.8 437.6h2.8v2.8h-2.8zM1036.7 437.6h2.8v2.8h-2.8zM1031.8 440.9h2.8v2.8h-2.8zM1033.2 440.4h2.8v2.8h-2.8zM1031.2 445.1h2.8v2.8h-2.8zM1033.6 444.7h2.8v2.8h-2.8zM1030.8 447.9h2.8v2.8h-2.8zM1033.1 449.1h2.8v2.8h-2.8zM1032.0 452.4h2.8v2.8h-2.8zM1034.7 452.8h2.8v2.8h-2.8zM1036.6 453.4h2.8v2.8h-2.8zM1030.2 456.8h2.8v2.8h-2.8zM1031.9 455.9h2.8v2.8h-2.8zM1033.9 456.7h2.8v2.8h-2.8zM1028.5 460.3h2.8v2.8h-2.8zM1032.8 460.8h2.8v2.8h-2.8zM1035.1 461.3h2.8v2.8h-2.8zM1037.0 461.0h2.8v2.8h-2.8zM1032.0 464.2h2.8v2.8h-2.8zM1034.7 464.4h2.8v2.8h-2.8zM1037.0 464.8h2.8v2.8h-2.8zM1028.2 467.0h2.8v2.8h-2.8zM1035.0 468.6h2.8v2.8h-2.8zM1036.3 470.0h2.8v2.8h-2.8zM1032.1 471.7h2.8v2.8h-2.8zM1033.4 472.2h2.8v2.8h-2.8zM1036.2 473.8h2.8v2.8h-2.8zM1037.6 473.7h2.8v2.8h-2.8zM1031.2 476.8h2.8v2.8h-2.8zM1033.2 477.2h2.8v2.8h-2.8zM1035.6 477.0h2.8v2.8h-2.8zM1029.0 480.2h2.8v2.8h-2.8zM1031.3 480.6h2.8v2.8h-2.8zM1033.0 481.2h2.8v2.8h-2.8zM1029.6 483.2h2.8v2.8h-2.8zM1031.7 484.6h2.8v2.8h-2.8zM1033.7 484.2h2.8v2.8h-2.8zM1034.8 485.3h2.8v2.8h-2.8zM1028.5 487.2h2.8v2.8h-2.8zM1033.3 488.9h2.8v2.8h-2.8zM1030.3 492.2h2.8v2.8h-2.8zM1031.7 492.4h2.8v2.8h-2.8zM1033.6 493.3h2.8v2.8h-2.8zM1029.0 495.3h2.8v2.8h-2.8zM1032.0 496.3h2.8v2.8h-2.8zM1033.1 496.1h2.8v2.8h-2.8zM1029.6 500.4h2.8v2.8h-2.8zM1031.5 499.8h2.8v2.8h-2.8zM1033.7 501.0h2.8v2.8h-2.8zM1035.6 501.1h2.8v2.8h-2.8zM1028.9 503.8h2.8v2.8h-2.8zM1031.3 504.6h2.8v2.8h-2.8zM1033.4 504.4h2.8v2.8h-2.8zM1034.8 504.3h2.8v2.8h-2.8zM1029.2 508.2h2.8v2.8h-2.8zM1034.1 508.5h2.8v2.8h-2.8zM1029.2 511.4h2.8v2.8h-2.8zM1030.9 512.0h2.8v2.8h-2.8zM1033.6 512.5h2.8v2.8h-2.8zM1028.1 515.5h2.8v2.8h-2.8zM1031.1 516.6h2.8v2.8h-2.8zM1032.3 517.2h2.8v2.8h-2.8zM1035.0 516.3h2.8v2.8h-2.8zM1029.6 520.3h2.8v2.8h-2.8zM1032.2 521.0h2.8v2.8h-2.8zM1029.7 523.7h2.8v2.8h-2.8zM1031.3 523.8h2.8v2.8h-2.8zM1033.7 525.2h2.8v2.8h-2.8zM1028.3 527.5h2.8v2.8h-2.8zM1030.6 528.3h2.8v2.8h-2.8zM1032.5 529.0h2.8v2.8h-2.8zM1034.8 528.4h2.8v2.8h-2.8zM1028.6 531.3h2.8v2.8h-2.8zM1030.4 532.3h2.8v2.8h-2.8zM1032.8 532.0h2.8v2.8h-2.8zM1030.0 535.8h2.8v2.8h-2.8zM1032.1 536.3h2.8v2.8h-2.8zM1034.0 536.9h2.8v2.8h-2.8zM1029.6 540.4h2.8v2.8h-2.8zM1031.2 540.5h2.8v2.8h-2.8zM1034.0 540.0h2.8v2.8h-2.8zM1029.4 544.2h2.8v2.8h-2.8zM1031.8 544.0h2.8v2.8h-2.8zM1032.7 544.0h2.8v2.8h-2.8zM1028.4 547.6h2.8v2.8h-2.8zM1030.4 547.6h2.8v2.8h-2.8zM1032.9 548.1h2.8v2.8h-2.8zM1035.0 549.3h2.8v2.8h-2.8zM1029.9 551.2h2.8v2.8h-2.8zM1031.8 551.9h2.8v2.8h-2.8zM1033.4 553.1h2.8v2.8h-2.8zM1035.9 553.5h2.8v2.8h-2.8zM1029.8 556.4h2.8v2.8h-2.8zM1030.8 556.1h2.8v2.8h-2.8zM1033.5 557.2h2.8v2.8h-2.8zM1035.2 557.6h2.8v2.8h-2.8zM1031.0 560.0h2.8v2.8h-2.8zM1033.1 560.3h2.8v2.8h-2.8zM1029.3 564.3h2.8v2.8h-2.8zM1030.8 564.1h2.8v2.8h-2.8zM1033.6 564.6h2.8v2.8h-2.8zM1034.9 564.9h2.8v2.8h-2.8zM1030.2 567.5h2.8v2.8h-2.8zM1032.2 568.4h2.8v2.8h-2.8zM1034.2 568.2h2.8v2.8h-2.8zM1029.0 572.1h2.8v2.8h-2.8zM1031.1 571.6h2.8v2.8h-2.8zM1033.0 573.2h2.8v2.8h-2.8zM1034.8 573.0h2.8v2.8h-2.8zM1030.6 575.6h2.8v2.8h-2.8zM1032.8 576.3h2.8v2.8h-2.8zM1035.2 577.0h2.8v2.8h-2.8zM1029.2 579.6h2.8v2.8h-2.8zM1031.3 580.8h2.8v2.8h-2.8zM1033.6 580.6h2.8v2.8h-2.8zM1034.8 581.1h2.8v2.8h-2.8zM1029.5 584.0h2.8v2.8h-2.8zM1031.4 584.3h2.8v2.8h-2.8zM1033.4 584.9h2.8v2.8h-2.8zM1036.1 585.1h2.8v2.8h-2.8zM853.7 584.1h2.8v2.8h-2.8zM857.4 588.4h2.8v2.8h-2.8zM856.8 587.0h2.8v2.8h-2.8zM1027.5 586.5h2.8v2.8h-2.8zM1028.6 577.2h2.8v2.8h-2.8zM1026.7 578.2h2.8v2.8h-2.8zM1022.0 572.8h2.8v2.8h-2.8zM1015.8 586.4h2.8v2.8h-2.8zM1023.3 580.6h2.8v2.8h-2.8zM1019.5 588.3h2.8v2.8h-2.8zM1021.7 586.9h2.8v2.8h-2.8zM1022.7 575.6h2.8v2.8h-2.8zM1019.4 575.4h2.8v2.8h-2.8zM1017.2 580.7h2.8v2.8h-2.8zM1024.4 580.8h2.8v2.8h-2.8zM1025.0 574.7h2.8v2.8h-2.8zM1025.5 579.9h2.8v2.8h-2.8zM1022.8 588.5h2.8v2.8h-2.8zM1029.2 587.0h2.8v2.8h-2.8zM1027.4 587.7h2.8v2.8h-2.8zM1024.5 586.3h2.8v2.8h-2.8zM1021.6 580.8h2.8v2.8h-2.8zM1028.7 581.0h2.8v2.8h-2.8zM1029.1 605.4h2.8v2.8h-2.8zM1039.3 612.8h2.8v2.8h-2.8zM1028.4 600.1h2.8v2.8h-2.8zM1034.7 606.2h2.8v2.8h-2.8zM1039.9 615.2h2.8v2.8h-2.8z"/>
<path fill="#a0ff00" d="M835.6 37.6h2.8v2.8h-2.8zM841.6 36.6h2.8v2.8h-2.8zM850.6 34.6h2.8v2.8h-2.8zM861.6 35.1h2.8v2.8h-2.8zM1007.6 34.1h2.8v2.8h-2.8zM1015.6 34.1h2.8v2.8h-2.8zM1025.6 35.1h2.8v2.8h-2.8zM830.6 62.6h2.8v2.8h-2.8zM1028.6 66.6h2.8v2.8h-2.8zM890.6 179.6h2.8v2.8h-2.8zM888.6 183.6h2.8v2.8h-2.8zM896.6 184.1h2.8v2.8h-2.8zM900.6 181.1h2.8v2.8h-2.8zM907.6 185.1h2.8v2.8h-2.8zM911.6 185.1h2.8v2.8h-2.8zM918.6 185.6h2.8v2.8h-2.8zM922.6 185.6h2.8v2.8h-2.8zM928.6 185.6h2.8v2.8h-2.8zM932.6 183.1h2.8v2.8h-2.8zM939.6 186.6h2.8v2.8h-2.8zM947.6 186.1h2.8v2.8h-2.8zM950.6 184.6h2.8v2.8h-2.8zM957.6 187.6h2.8v2.8h-2.8zM961.6 187.6h2.8v2.8h-2.8zM968.6 185.1h2.8v2.8h-2.8zM972.6 188.6h2.8v2.8h-2.8zM834.3 140.2h2.8v2.8h-2.8zM831.7 169.3h2.8v2.8h-2.8zM836.6 193.8h2.8v2.8h-2.8zM837.0 232.1h2.8v2.8h-2.8zM832.0 214.0h2.8v2.8h-2.8zM831.7 215.3h2.8v2.8h-2.8zM834.3 212.4h2.8v2.8h-2.8zM832.7 249.7h2.8v2.8h-2.8zM834.0 250.8h2.8v2.8h-2.8zM831.6 265.4h2.8v2.8h-2.8zM1024.1 152.5h2.8v2.8h-2.8zM1028.6 196.4h2.8v2.8h-2.8zM1030.7 196.0h2.8v2.8h-2.8zM1038.2 212.0h2.8v2.8h-2.8zM1031.3 225.5h2.8v2.8h-2.8zM1040.0 235.0h2.8v2.8h-2.8zM1029.0 251.0h2.8v2.8h-2.8zM1031.9 250.4h2.8v2.8h-2.8zM1026.6 260.6h2.8v2.8h-2.8zM814.6 271.1h2.8v2.8h-2.8zM823.3 271.7h2.8v2.8h-2.8zM805.4 274.6h2.8v2.8h-2.8zM1063.3 268.2h2.8v2.8h-2.8zM1034.6 269.1h2.8v2.8h-2.8zM1063.0 269.1h2.8v2.8h-2.8zM1026.5 272.1h2.8v2.8h-2.8zM1090.5 271.7h2.8v2.8h-2.8zM1036.7 271.4h2.8v2.8h-2.8zM1026.0 271.4h2.8v2.8h-2.8zM1047.8 274.4h2.8v2.8h-2.8zM1037.9 273.9h2.8v2.8h-2.8zM839.0 339.9h2.8v2.8h-2.8zM838.2 344.6h2.8v2.8h-2.8zM836.6 345.9h2.8v2.8h-2.8zM836.7 353.3h2.8v2.8h-2.8zM836.6 355.6h2.8v2.8h-2.8zM837.2 358.8h2.8v2.8h-2.8zM836.7 359.7h2.8v2.8h-2.8zM836.8 361.8h2.8v2.8h-2.8zM835.0 367.4h2.8v2.8h-2.8zM836.8 371.8h2.8v2.8h-2.8zM837.7 372.4h2.8v2.8h-2.8zM839.0 374.0h2.8v2.8h-2.8zM838.9 379.5h2.8v2.8h-2.8zM838.8 379.7h2.8v2.8h-2.8zM838.9 390.8h2.8v2.8h-2.8zM836.8 396.6h2.8v2.8h-2.8zM833.4 399.8h2.8v2.8h-2.8zM833.4 400.0h2.8v2.8h-2.8zM833.3 403.9h2.8v2.8h-2.8zM836.1 405.9h2.8v2.8h-2.8zM835.5 408.1h2.8v2.8h-2.8zM832.6 412.6h2.8v2.8h-2.8zM833.4 420.2h2.8v2.8h-2.8zM833.3 418.6h2.8v2.8h-2.8zM833.8 421.6h2.8v2.8h-2.8zM833.9 426.2h2.8v2.8h-2.8zM834.0 426.4h2.8v2.8h-2.8zM834.4 428.4h2.8v2.8h-2.8zM836.0 427.6h2.8v2.8h-2.8zM833.6 430.3h2.8v2.8h-2.8zM837.8 434.3h2.8v2.8h-2.8zM838.1 434.5h2.8v2.8h-2.8zM836.0 437.0h2.8v2.8h-2.8zM834.6 438.2h2.8v2.8h-2.8zM834.1 440.1h2.8v2.8h-2.8zM836.5 443.0h2.8v2.8h-2.8zM836.4 445.3h2.8v2.8h-2.8zM835.4 444.7h2.8v2.8h-2.8zM834.4 445.8h2.8v2.8h-2.8zM833.9 445.9h2.8v2.8h-2.8zM833.9 449.5h2.8v2.8h-2.8zM836.2 448.1h2.8v2.8h-2.8zM834.8 448.0h2.8v2.8h-2.8zM834.8 451.6h2.8v2.8h-2.8zM835.6 451.1h2.8v2.8h-2.8zM834.5 454.0h2.8v2.8h-2.8zM835.0 455.1h2.8v2.8h-2.8zM835.0 455.0h2.8v2.8h-2.8zM835.1 455.6h2.8v2.8h-2.8zM834.0 457.0h2.8v2.8h-2.8zM834.3 459.0h2.8v2.8h-2.8zM835.4 460.9h2.8v2.8h-2.8zM836.5 465.5h2.8v2.8h-2.8zM836.8 466.4h2.8v2.8h-2.8zM835.2 470.2h2.8v2.8h-2.8zM835.9 471.2h2.8v2.8h-2.8zM834.6 471.8h2.8v2.8h-2.8zM834.0 473.4h2.8v2.8h-2.8zM834.5 477.3h2.8v2.8h-2.8zM836.7 477.2h2.8v2.8h-2.8zM835.6 477.8h2.8v2.8h-2.8zM837.0 479.8h2.8v2.8h-2.8zM835.4 484.6h2.8v2.8h-2.8zM837.3 486.2h2.8v2.8h-2.8zM834.5 487.0h2.8v2.8h-2.8zM835.3 487.7h2.8v2.8h-2.8zM835.5 489.2h2.8v2.8h-2.8zM836.0 493.7h2.8v2.8h-2.8zM838.6 495.0h2.8v2.8h-2.8zM835.8 495.3h2.8v2.8h-2.8zM835.8 497.1h2.8v2.8h-2.8zM835.4 505.9h2.8v2.8h-2.8zM836.8 505.0h2.8v2.8h-2.8zM838.0 506.8h2.8v2.8h-2.8zM836.6 510.1h2.8v2.8h-2.8zM837.1 512.7h2.8v2.8h-2.8zM835.6 514.0h2.8v2.8h-2.8zM835.7 516.8h2.8v2.8h-2.8zM837.0 520.5h2.8v2.8h-2.8zM835.9 522.9h2.8v2.8h-2.8zM837.5 523.5h2.8v2.8h-2.8zM836.4 525.2h2.8v2.8h-2.8zM839.1 529.1h2.8v2.8h-2.8zM834.7 527.7h2.8v2.8h-2.8zM836.1 533.1h2.8v2.8h-2.8zM838.3 535.8h2.8v2.8h-2.8zM835.9 535.6h2.8v2.8h-2.8zM838.0 537.1h2.8v2.8h-2.8zM836.9 539.1h2.8v2.8h-2.8zM836.0 539.2h2.8v2.8h-2.8zM835.2 545.0h2.8v2.8h-2.8zM835.5 545.3h2.8v2.8h-2.8zM835.6 549.4h2.8v2.8h-2.8zM837.7 552.0h2.8v2.8h-2.8zM835.7 551.3h2.8v2.8h-2.8zM836.3 553.9h2.8v2.8h-2.8zM838.7 554.2h2.8v2.8h-2.8zM836.0 556.4h2.8v2.8h-2.8zM835.7 556.0h2.8v2.8h-2.8zM836.8 558.1h2.8v2.8h-2.8zM835.6 559.6h2.8v2.8h-2.8zM836.8 560.2h2.8v2.8h-2.8zM837.2 562.1h2.8v2.8h-2.8zM837.2 563.7h2.8v2.8h-2.8zM837.6 565.8h2.8v2.8h-2.8zM839.4 566.6h2.8v2.8h-2.8zM837.7 565.5h2.8v2.8h-2.8zM839.0 569.0h2.8v2.8h-2.8zM839.0 569.0h2.8v2.8h-2.8zM840.2 567.6h2.8v2.8h-2.8zM838.8 568.8h2.8v2.8h-2.8zM840.4 569.7h2.8v2.8h-2.8zM841.3 574.3h2.8v2.8h-2.8zM841.0 575.3h2.8v2.8h-2.8zM843.2 574.1h2.8v2.8h-2.8zM841.3 578.2h2.8v2.8h-2.8zM1028.0 345.2h2.8v2.8h-2.8zM1031.5 349.4h2.8v2.8h-2.8zM1030.4 352.7h2.8v2.8h-2.8zM1030.5 357.2h2.8v2.8h-2.8zM1032.4 358.0h2.8v2.8h-2.8zM1031.8 360.9h2.8v2.8h-2.8zM1033.0 366.0h2.8v2.8h-2.8zM1032.6 369.6h2.8v2.8h-2.8zM1032.7 377.5h2.8v2.8h-2.8zM1031.8 384.9h2.8v2.8h-2.8zM1032.2 389.7h2.8v2.8h-2.8zM1035.6 390.6h2.8v2.8h-2.8zM1032.4 393.5h2.8v2.8h-2.8zM1034.3 394.1h2.8v2.8h-2.8zM1034.1 397.1h2.8v2.8h-2.8zM1035.0 401.4h2.8v2.8h-2.8zM1033.2 412.6h2.8v2.8h-2.8zM1034.8 422.0h2.8v2.8h-2.8zM1035.6 433.7h2.8v2.8h-2.8zM1037.7 433.1h2.8v2.8h-2.8zM1035.7 441.0h2.8v2.8h-2.8zM1036.9 441.3h2.8v2.8h-2.8zM1035.8 445.0h2.8v2.8h-2.8zM1037.9 446.2h2.8v2.8h-2.8zM1039.0 446.1h2.8v2.8h-2.8zM1035.6 449.6h2.8v2.8h-2.8zM1036.7 449.4h2.8v2.8h-2.8zM1038.9 449.9h2.8v2.8h-2.8zM1035.7 457.4h2.8v2.8h-2.8zM1039.0 462.1h2.8v2.8h-2.8zM1037.7 477.7h2.8v2.8h-2.8zM1038.8 477.5h2.8v2.8h-2.8zM1035.1 481.6h2.8v2.8h-2.8zM1037.2 481.5h2.8v2.8h-2.8zM1039.3 482.2h2.8v2.8h-2.8zM1036.7 485.9h2.8v2.8h-2.8zM1038.7 486.2h2.8v2.8h-2.8zM1034.8 489.3h2.8v2.8h-2.8zM1037.1 488.9h2.8v2.8h-2.8zM1036.0 493.5h2.8v2.8h-2.8zM1035.6 496.9h2.8v2.8h-2.8zM1037.4 498.2h2.8v2.8h-2.8zM1038.2 500.9h2.8v2.8h-2.8zM1037.1 506.0h2.8v2.8h-2.8zM1038.7 505.2h2.8v2.8h-2.8zM1035.1 509.6h2.8v2.8h-2.8zM1037.4 509.2h2.8v2.8h-2.8zM1035.7 513.5h2.8v2.8h-2.8zM1037.9 513.8h2.8v2.8h-2.8zM1037.2 516.7h2.8v2.8h-2.8zM1039.1 518.2h2.8v2.8h-2.8zM1034.4 520.7h2.8v2.8h-2.8zM1036.3 520.8h2.8v2.8h-2.8zM1038.2 521.2h2.8v2.8h-2.8zM1035.7 525.8h2.8v2.8h-2.8zM1038.1 525.8h2.8v2.8h-2.8zM1036.9 528.8h2.8v2.8h-2.8zM1038.3 529.8h2.8v2.8h-2.8zM1034.9 532.4h2.8v2.8h-2.8zM1036.1 532.9h2.8v2.8h-2.8zM1038.5 534.1h2.8v2.8h-2.8zM1041.0 534.1h2.8v2.8h-2.8zM1035.3 537.4h2.8v2.8h-2.8zM1038.2 537.4h2.8v2.8h-2.8zM1039.5 537.6h2.8v2.8h-2.8zM1035.4 541.3h2.8v2.8h-2.8zM1037.8 542.2h2.8v2.8h-2.8zM1034.8 545.3h2.8v2.8h-2.8zM1037.4 544.8h2.8v2.8h-2.8zM1036.5 549.1h2.8v2.8h-2.8zM1039.4 549.8h2.8v2.8h-2.8zM1038.1 553.7h2.8v2.8h-2.8zM1035.5 561.4h2.8v2.8h-2.8zM1037.2 561.7h2.8v2.8h-2.8zM1039.0 562.0h2.8v2.8h-2.8zM1037.3 565.9h2.8v2.8h-2.8zM1036.0 569.3h2.8v2.8h-2.8zM1040.4 569.9h2.8v2.8h-2.8zM1037.3 572.7h2.8v2.8h-2.8zM1037.0 578.0h2.8v2.8h-2.8zM1038.7 578.3h2.8v2.8h-2.8zM1037.1 581.9h2.8v2.8h-2.8zM1039.5 581.2h2.8v2.8h-2.8zM1037.4 585.5h2.8v2.8h-2.8zM1039.3 586.0h2.8v2.8h-2.8zM872.7 592.7h2.8v2.8h-2.8zM852.1 583.7h2.8v2.8h-2.8zM858.8 588.3h2.8v2.8h-2.8zM858.5 590.3h2.8v2.8h-2.8zM870.4 589.1h2.8v2.8h-2.8zM884.4 594.0h2.8v2.8h-2.8zM846.5 580.8h2.8v2.8h-2.8zM869.1 591.1h2.8v2.8h-2.8zM883.5 589.2h2.8v2.8h-2.8zM879.3 593.7h2.8v2.8h-2.8zM862.4 591.4h2.8v2.8h-2.8zM886.4 590.8h2.8v2.8h-2.8zM891.7 593.4h2.8v2.8h-2.8zM863.0 589.2h2.8v2.8h-2.8zM882.2 593.5h2.8v2.8h-2.8zM876.5 589.6h2.8v2.8h-2.8zM850.0 585.5h2.8v2.8h-2.8zM877.6 591.8h2.8v2.8h-2.8zM848.8 583.9h2.8v2.8h-2.8zM849.5 580.9h2.8v2.8h-2.8zM856.2 588.7h2.8v2.8h-2.8zM852.5 585.7h2.8v2.8h-2.8zM847.2 579.0h2.8v2.8h-2.8zM853.2 583.1h2.8v2.8h-2.8zM848.4 581.5h2.8v2.8h-2.8zM854.0 589.4h2.8v2.8h-2.8zM860.8 586.6h2.8v2.8h-2.8zM850.9 582.4h2.8v2.8h-2.8zM855.7 587.6h2.8v2.8h-2.8zM847.5 581.0h2.8v2.8h-2.8zM846.3 579.8h2.8v2.8h-2.8zM901.2 581.8h2.8v2.8h-2.8zM905.3 585.5h2.8v2.8h-2.8zM901.3 585.1h2.8v2.8h-2.8zM898.8 586.2h2.8v2.8h-2.8zM908.7 581.4h2.8v2.8h-2.8zM907.0 582.4h2.8v2.8h-2.8zM908.8 580.2h2.8v2.8h-2.8zM903.2 583.9h2.8v2.8h-2.8zM967.9 575.3h2.8v2.8h-2.8zM968.3 575.2h2.8v2.8h-2.8zM974.4 582.6h2.8v2.8h-2.8zM960.2 584.0h2.8v2.8h-2.8zM970.7 582.7h2.8v2.8h-2.8zM978.0 582.7h2.8v2.8h-2.8zM961.0 582.3h2.8v2.8h-2.8zM962.3 581.3h2.8v2.8h-2.8zM964.2 584.5h2.8v2.8h-2.8zM973.9 576.2h2.8v2.8h-2.8zM964.6 576.7h2.8v2.8h-2.8zM975.0 583.9h2.8v2.8h-2.8zM958.8 581.8h2.8v2.8h-2.8zM968.2 584.0h2.8v2.8h-2.8zM957.6 581.7h2.8v2.8h-2.8zM962.8 584.1h2.8v2.8h-2.8zM958.3 584.2h2.8v2.8h-2.8zM972.4 582.5h2.8v2.8h-2.8zM969.7 580.9h2.8v2.8h-2.8zM961.6 578.9h2.8v2.8h-2.8zM970.3 579.1h2.8v2.8h-2.8zM965.3 582.7h2.8v2.8h-2.8zM965.3 580.0h2.8v2.8h-2.8zM966.5 582.0h2.8v2.8h-2.8zM960.8 580.5h2.8v2.8h-2.8zM967.7 579.9h2.8v2.8h-2.8zM964.4 575.4h2.8v2.8h-2.8zM971.8 582.4h2.8v2.8h-2.8zM973.7 579.6h2.8v2.8h-2.8zM973.1 576.6h2.8v2.8h-2.8zM974.1 579.5h2.8v2.8h-2.8zM974.4 582.0h2.8v2.8h-2.8zM960.6 583.4h2.8v2.8h-2.8zM962.7 580.8h2.8v2.8h-2.8zM969.3 580.3h2.8v2.8h-2.8zM976.6 578.2h2.8v2.8h-2.8zM969.3 578.6h2.8v2.8h-2.8zM979.0 581.9h2.8v2.8h-2.8zM979.0 582.1h2.8v2.8h-2.8zM1024.7 583.8h2.8v2.8h-2.8zM1017.5 587.7h2.8v2.8h-2.8zM1021.2 585.8h2.8v2.8h-2.8zM1024.7 584.9h2.8v2.8h-2.8zM1027.4 583.5h2.8v2.8h-2.8zM1017.6 584.0h2.8v2.8h-2.8zM1027.8 587.4h2.8v2.8h-2.8zM1016.7 587.2h2.8v2.8h-2.8zM1019.3 588.3h2.8v2.8h-2.8zM1027.9 583.6h2.8v2.8h-2.8zM1021.6 586.8h2.8v2.8h-2.8zM1026.4 583.6h2.8v2.8h-2.8zM1021.9 587.6h2.8v2.8h-2.8zM1027.5 597.1h2.8v2.8h-2.8zM1029.1 600.7h2.8v2.8h-2.8zM1033.8 607.5h2.8v2.8h-2.8zM1035.7 611.8h2.8v2.8h-2.8zM1033.6 602.8h2.8v2.8h-2.8zM1040.6 612.2h2.8v2.8h-2.8zM1040.8 620.1h2.8v2.8h-2.8zM1032.2 606.3h2.8v2.8h-2.8zM1034.0 605.4h2.8v2.8h-2.8z"/>
<path fill="#00ff18" d="M837.6 34.6h2.8v2.8h-2.8zM844.6 31.6h2.8v2.8h-2.8zM855.6 35.6h2.8v2.8h-2.8zM859.6 29.1h2.8v2.8h-2.8zM1011.6 34.1h2.8v2.8h-2.8zM1019.6 30.6h2.8v2.8h-2.8zM1030.6 31.6h2.8v2.8h-2.8zM832.6 59.6h2.8v2.8h-2.8zM1027.6 71.6h2.8v2.8h-2.8zM834.6 98.6h2.8v2.8h-2.8zM836.6 99.6h2.8v2.8h-2.8zM879.6 96.6h2.8v2.8h-2.8zM997.6 93.1h2.8v2.8h-2.8zM1026.6 91.6h2.8v2.8h-2.8zM888.6 164.6h2.8v2.8h-2.8zM895.6 165.1h2.8v2.8h-2.8zM903.6 165.6h2.8v2.8h-2.8zM907.6 165.1h2.8v2.8h-2.8zM913.6 166.1h2.8v2.8h-2.8zM921.6 163.1h2.8v2.8h-2.8zM925.6 163.1h2.8v2.8h-2.8zM932.6 164.1h2.8v2.8h-2.8zM936.6 164.1h2.8v2.8h-2.8zM943.6 164.6h2.8v2.8h-2.8zM950.6 164.6h2.8v2.8h-2.8zM954.6 168.6h2.8v2.8h-2.8zM961.6 165.1h2.8v2.8h-2.8zM968.6 162.6h2.8v2.8h-2.8zM976.6 163.1h2.8v2.8h-2.8zM979.6 163.1h2.8v2.8h-2.8zM835.7 139.4h2.8v2.8h-2.8zM832.6 168.6h2.8v2.8h-2.8zM838.2 193.2h2.8v2.8h-2.8zM838.4 231.4h2.8v2.8h-2.8zM830.6 217.5h2.8v2.8h-2.8zM835.8 252.0h2.8v2.8h-2.8zM841.4 247.4h2.8v2.8h-2.8zM839.1 247.0h2.8v2.8h-2.8zM832.5 247.4h2.8v2.8h-2.8zM842.6 262.1h2.8v2.8h-2.8zM840.1 267.1h2.8v2.8h-2.8zM1027.6 114.6h2.8v2.8h-2.8zM1025.8 151.7h2.8v2.8h-2.8zM1033.4 195.6h2.8v2.8h-2.8zM1033.4 213.2h2.8v2.8h-2.8zM1033.4 225.2h2.8v2.8h-2.8zM1035.0 224.6h2.8v2.8h-2.8zM1026.3 236.3h2.8v2.8h-2.8zM1029.5 240.5h2.8v2.8h-2.8zM1038.0 240.9h2.8v2.8h-2.8zM1034.9 239.0h2.8v2.8h-2.8zM1033.7 249.8h2.8v2.8h-2.8zM817.4 271.5h2.8v2.8h-2.8zM819.4 274.1h2.8v2.8h-2.8zM820.2 277.4h2.8v2.8h-2.8zM805.9 277.4h2.8v2.8h-2.8zM804.9 277.7h2.8v2.8h-2.8zM842.3 263.3h2.8v2.8h-2.8zM1070.1 268.4h2.8v2.8h-2.8zM1066.4 272.0h2.8v2.8h-2.8zM1061.3 271.3h2.8v2.8h-2.8zM1043.2 271.7h2.8v2.8h-2.8zM1057.5 271.3h2.8v2.8h-2.8zM1090.3 271.1h2.8v2.8h-2.8zM1041.0 271.3h2.8v2.8h-2.8zM1039.0 274.1h2.8v2.8h-2.8zM1051.5 273.5h2.8v2.8h-2.8zM840.9 343.5h2.8v2.8h-2.8zM839.5 345.7h2.8v2.8h-2.8zM839.4 347.5h2.8v2.8h-2.8zM839.5 348.7h2.8v2.8h-2.8zM838.1 348.8h2.8v2.8h-2.8zM838.8 350.2h2.8v2.8h-2.8zM838.9 352.5h2.8v2.8h-2.8zM839.9 355.1h2.8v2.8h-2.8zM839.6 369.4h2.8v2.8h-2.8zM838.9 370.6h2.8v2.8h-2.8zM838.0 374.7h2.8v2.8h-2.8zM840.7 376.5h2.8v2.8h-2.8zM839.5 388.4h2.8v2.8h-2.8zM839.2 395.6h2.8v2.8h-2.8zM837.9 402.5h2.8v2.8h-2.8zM838.1 403.9h2.8v2.8h-2.8zM836.6 404.4h2.8v2.8h-2.8zM837.6 406.2h2.8v2.8h-2.8zM834.7 408.0h2.8v2.8h-2.8zM836.8 408.1h2.8v2.8h-2.8zM835.1 410.6h2.8v2.8h-2.8zM836.6 411.9h2.8v2.8h-2.8zM836.7 414.0h2.8v2.8h-2.8zM839.9 415.0h2.8v2.8h-2.8zM837.1 415.6h2.8v2.8h-2.8zM836.1 419.1h2.8v2.8h-2.8zM835.4 422.4h2.8v2.8h-2.8zM835.0 424.8h2.8v2.8h-2.8zM839.1 428.2h2.8v2.8h-2.8zM839.7 427.6h2.8v2.8h-2.8zM838.2 431.6h2.8v2.8h-2.8zM837.1 435.7h2.8v2.8h-2.8zM840.0 435.8h2.8v2.8h-2.8zM838.9 437.4h2.8v2.8h-2.8zM838.5 442.1h2.8v2.8h-2.8zM838.3 448.1h2.8v2.8h-2.8zM840.9 450.7h2.8v2.8h-2.8zM839.0 457.8h2.8v2.8h-2.8zM835.6 457.9h2.8v2.8h-2.8zM838.4 458.6h2.8v2.8h-2.8zM839.3 459.1h2.8v2.8h-2.8zM837.1 462.1h2.8v2.8h-2.8zM836.7 463.4h2.8v2.8h-2.8zM835.6 463.8h2.8v2.8h-2.8zM836.3 463.7h2.8v2.8h-2.8zM837.4 466.0h2.8v2.8h-2.8zM836.3 468.1h2.8v2.8h-2.8zM834.9 467.2h2.8v2.8h-2.8zM837.5 470.3h2.8v2.8h-2.8zM837.3 475.9h2.8v2.8h-2.8zM840.6 480.3h2.8v2.8h-2.8zM839.9 483.4h2.8v2.8h-2.8zM837.6 485.1h2.8v2.8h-2.8zM837.8 486.3h2.8v2.8h-2.8zM839.6 487.3h2.8v2.8h-2.8zM840.1 489.6h2.8v2.8h-2.8zM840.1 490.2h2.8v2.8h-2.8zM841.0 490.4h2.8v2.8h-2.8zM838.3 491.5h2.8v2.8h-2.8zM835.9 492.2h2.8v2.8h-2.8zM840.0 494.6h2.8v2.8h-2.8zM838.7 498.0h2.8v2.8h-2.8zM839.3 502.3h2.8v2.8h-2.8zM838.9 500.9h2.8v2.8h-2.8zM839.0 502.7h2.8v2.8h-2.8zM839.7 503.1h2.8v2.8h-2.8zM839.0 503.1h2.8v2.8h-2.8zM837.9 503.9h2.8v2.8h-2.8zM838.6 508.0h2.8v2.8h-2.8zM838.6 508.8h2.8v2.8h-2.8zM840.6 511.7h2.8v2.8h-2.8zM840.8 513.9h2.8v2.8h-2.8zM837.6 513.0h2.8v2.8h-2.8zM838.5 513.9h2.8v2.8h-2.8zM837.8 516.5h2.8v2.8h-2.8zM838.7 516.5h2.8v2.8h-2.8zM837.0 515.3h2.8v2.8h-2.8zM839.3 518.7h2.8v2.8h-2.8zM841.1 518.8h2.8v2.8h-2.8zM840.0 519.6h2.8v2.8h-2.8zM837.8 520.1h2.8v2.8h-2.8zM837.2 523.9h2.8v2.8h-2.8zM841.9 524.7h2.8v2.8h-2.8zM840.4 526.2h2.8v2.8h-2.8zM840.1 526.5h2.8v2.8h-2.8zM837.8 527.4h2.8v2.8h-2.8zM840.8 528.0h2.8v2.8h-2.8zM838.5 532.0h2.8v2.8h-2.8zM840.6 539.3h2.8v2.8h-2.8zM837.5 539.5h2.8v2.8h-2.8zM841.5 543.5h2.8v2.8h-2.8zM841.3 543.7h2.8v2.8h-2.8zM841.7 543.1h2.8v2.8h-2.8zM840.6 543.2h2.8v2.8h-2.8zM841.4 546.2h2.8v2.8h-2.8zM839.2 546.8h2.8v2.8h-2.8zM840.4 547.0h2.8v2.8h-2.8zM838.4 552.6h2.8v2.8h-2.8zM841.7 558.6h2.8v2.8h-2.8zM838.1 558.7h2.8v2.8h-2.8zM842.1 560.5h2.8v2.8h-2.8zM838.6 561.3h2.8v2.8h-2.8zM840.6 562.4h2.8v2.8h-2.8zM839.9 564.5h2.8v2.8h-2.8zM843.6 571.2h2.8v2.8h-2.8zM843.6 571.1h2.8v2.8h-2.8zM843.8 577.9h2.8v2.8h-2.8zM841.4 576.4h2.8v2.8h-2.8zM842.2 578.2h2.8v2.8h-2.8zM844.0 578.5h2.8v2.8h-2.8zM843.9 578.9h2.8v2.8h-2.8zM1032.4 342.4h2.8v2.8h-2.8zM1034.1 342.0h2.8v2.8h-2.8zM1037.7 342.9h2.8v2.8h-2.8zM1032.4 346.1h2.8v2.8h-2.8zM1034.4 346.0h2.8v2.8h-2.8zM1035.6 346.3h2.8v2.8h-2.8zM1038.3 347.2h2.8v2.8h-2.8zM1034.1 350.4h2.8v2.8h-2.8zM1035.0 349.7h2.8v2.8h-2.8zM1033.0 353.1h2.8v2.8h-2.8zM1034.9 353.4h2.8v2.8h-2.8zM1034.9 358.5h2.8v2.8h-2.8zM1034.5 361.6h2.8v2.8h-2.8zM1035.9 362.9h2.8v2.8h-2.8zM1035.3 365.8h2.8v2.8h-2.8zM1038.8 367.1h2.8v2.8h-2.8zM1034.8 369.3h2.8v2.8h-2.8zM1037.3 370.5h2.8v2.8h-2.8zM1033.5 374.2h2.8v2.8h-2.8zM1037.0 374.0h2.8v2.8h-2.8zM1033.8 377.7h2.8v2.8h-2.8zM1036.4 377.5h2.8v2.8h-2.8zM1040.7 379.2h2.8v2.8h-2.8zM1034.1 381.9h2.8v2.8h-2.8zM1035.4 381.9h2.8v2.8h-2.8zM1038.4 382.0h2.8v2.8h-2.8zM1034.8 385.7h2.8v2.8h-2.8zM1036.3 386.5h2.8v2.8h-2.8zM1040.5 387.5h2.8v2.8h-2.8zM1034.0 389.7h2.8v2.8h-2.8zM1037.3 390.5h2.8v2.8h-2.8zM1039.9 390.8h2.8v2.8h-2.8zM1036.7 394.5h2.8v2.8h-2.8zM1038.7 394.1h2.8v2.8h-2.8zM1037.0 398.5h2.8v2.8h-2.8zM1037.8 402.6h2.8v2.8h-2.8zM1039.6 403.0h2.8v2.8h-2.8zM1036.8 406.3h2.8v2.8h-2.8zM1039.5 406.2h2.8v2.8h-2.8zM1037.4 409.8h2.8v2.8h-2.8zM1039.3 410.8h2.8v2.8h-2.8zM1036.1 413.8h2.8v2.8h-2.8zM1037.9 414.7h2.8v2.8h-2.8zM1039.6 414.1h2.8v2.8h-2.8zM1038.8 418.0h2.8v2.8h-2.8zM1040.2 418.7h2.8v2.8h-2.8zM1037.0 421.3h2.8v2.8h-2.8zM1037.9 422.7h2.8v2.8h-2.8zM1037.8 426.6h2.8v2.8h-2.8zM1040.3 426.2h2.8v2.8h-2.8zM1042.3 426.4h2.8v2.8h-2.8zM1038.9 430.3h2.8v2.8h-2.8zM1039.9 429.8h2.8v2.8h-2.8zM1039.8 434.9h2.8v2.8h-2.8zM1043.5 435.4h2.8v2.8h-2.8zM1038.9 437.8h2.8v2.8h-2.8zM1040.7 438.5h2.8v2.8h-2.8zM1038.9 441.5h2.8v2.8h-2.8zM1041.6 441.9h2.8v2.8h-2.8zM1041.0 447.0h2.8v2.8h-2.8zM1041.7 450.2h2.8v2.8h-2.8zM1043.6 450.5h2.8v2.8h-2.8zM1040.7 454.7h2.8v2.8h-2.8zM1037.8 458.3h2.8v2.8h-2.8zM1040.8 458.1h2.8v2.8h-2.8zM1042.2 459.0h2.8v2.8h-2.8zM1040.7 461.7h2.8v2.8h-2.8zM1038.7 465.9h2.8v2.8h-2.8zM1040.2 466.5h2.8v2.8h-2.8zM1042.1 467.3h2.8v2.8h-2.8zM1039.0 469.9h2.8v2.8h-2.8zM1040.6 470.0h2.8v2.8h-2.8zM1044.3 470.3h2.8v2.8h-2.8zM1040.1 474.6h2.8v2.8h-2.8zM1041.8 474.5h2.8v2.8h-2.8zM1041.8 478.6h2.8v2.8h-2.8zM1041.1 482.3h2.8v2.8h-2.8zM1043.7 482.1h2.8v2.8h-2.8zM1041.0 485.7h2.8v2.8h-2.8zM1043.5 487.1h2.8v2.8h-2.8zM1038.6 489.5h2.8v2.8h-2.8zM1040.8 490.2h2.8v2.8h-2.8zM1043.2 490.9h2.8v2.8h-2.8zM1040.3 493.3h2.8v2.8h-2.8zM1042.2 494.7h2.8v2.8h-2.8zM1039.7 497.9h2.8v2.8h-2.8zM1043.9 499.2h2.8v2.8h-2.8zM1040.3 502.4h2.8v2.8h-2.8zM1042.3 502.8h2.8v2.8h-2.8zM1044.2 503.5h2.8v2.8h-2.8zM1041.6 506.9h2.8v2.8h-2.8zM1042.5 506.5h2.8v2.8h-2.8zM1041.4 510.9h2.8v2.8h-2.8zM1039.1 513.2h2.8v2.8h-2.8zM1042.0 514.2h2.8v2.8h-2.8zM1043.0 515.1h2.8v2.8h-2.8zM1040.1 517.7h2.8v2.8h-2.8zM1042.2 519.2h2.8v2.8h-2.8zM1039.9 521.6h2.8v2.8h-2.8zM1041.7 523.1h2.8v2.8h-2.8zM1043.9 522.8h2.8v2.8h-2.8zM1040.5 526.6h2.8v2.8h-2.8zM1041.4 525.8h2.8v2.8h-2.8zM1043.8 527.5h2.8v2.8h-2.8zM1040.5 529.9h2.8v2.8h-2.8zM1044.2 531.0h2.8v2.8h-2.8zM1043.0 535.2h2.8v2.8h-2.8zM1041.2 538.7h2.8v2.8h-2.8zM1039.1 542.1h2.8v2.8h-2.8zM1041.9 542.8h2.8v2.8h-2.8zM1038.8 545.2h2.8v2.8h-2.8zM1041.7 545.7h2.8v2.8h-2.8zM1043.3 546.6h2.8v2.8h-2.8zM1041.2 550.4h2.8v2.8h-2.8zM1040.0 554.3h2.8v2.8h-2.8zM1041.9 553.7h2.8v2.8h-2.8zM1043.9 554.4h2.8v2.8h-2.8zM1040.9 558.3h2.8v2.8h-2.8zM1041.5 562.4h2.8v2.8h-2.8zM1039.4 565.7h2.8v2.8h-2.8zM1041.8 566.7h2.8v2.8h-2.8zM1043.4 566.3h2.8v2.8h-2.8zM1038.4 569.4h2.8v2.8h-2.8zM1042.5 570.0h2.8v2.8h-2.8zM1044.1 571.6h2.8v2.8h-2.8zM1039.2 573.3h2.8v2.8h-2.8zM1040.7 574.8h2.8v2.8h-2.8zM1043.5 575.3h2.8v2.8h-2.8zM1044.5 574.5h2.8v2.8h-2.8zM1041.0 577.8h2.8v2.8h-2.8zM1045.2 578.6h2.8v2.8h-2.8zM1041.4 581.6h2.8v2.8h-2.8zM1043.3 582.3h2.8v2.8h-2.8zM1042.1 586.7h2.8v2.8h-2.8zM1043.9 587.0h2.8v2.8h-2.8zM881.9 589.0h2.8v2.8h-2.8zM895.0 595.4h2.8v2.8h-2.8zM890.2 594.6h2.8v2.8h-2.8zM875.9 590.9h2.8v2.8h-2.8zM893.8 590.7h2.8v2.8h-2.8zM853.8 587.0h2.8v2.8h-2.8zM891.9 592.5h2.8v2.8h-2.8zM868.2 589.2h2.8v2.8h-2.8zM869.3 591.7h2.8v2.8h-2.8zM887.8 592.4h2.8v2.8h-2.8zM886.8 590.4h2.8v2.8h-2.8zM844.0 578.8h2.8v2.8h-2.8zM866.6 590.7h2.8v2.8h-2.8zM880.7 592.5h2.8v2.8h-2.8zM887.6 592.3h2.8v2.8h-2.8zM860.5 588.8h2.8v2.8h-2.8zM874.7 592.0h2.8v2.8h-2.8zM890.3 594.5h2.8v2.8h-2.8zM843.7 573.4h2.8v2.8h-2.8zM906.8 581.0h2.8v2.8h-2.8zM898.5 584.2h2.8v2.8h-2.8zM907.6 582.3h2.8v2.8h-2.8zM905.2 580.4h2.8v2.8h-2.8zM901.6 585.7h2.8v2.8h-2.8zM907.8 583.3h2.8v2.8h-2.8zM908.1 582.2h2.8v2.8h-2.8zM910.3 580.0h2.8v2.8h-2.8zM909.2 584.1h2.8v2.8h-2.8zM899.6 583.2h2.8v2.8h-2.8zM906.8 583.3h2.8v2.8h-2.8zM912.1 583.9h2.8v2.8h-2.8zM904.4 582.0h2.8v2.8h-2.8zM912.0 582.7h2.8v2.8h-2.8zM905.5 581.6h2.8v2.8h-2.8zM905.9 581.3h2.8v2.8h-2.8zM913.3 583.0h2.8v2.8h-2.8zM949.3 590.8h2.8v2.8h-2.8zM944.6 589.6h2.8v2.8h-2.8zM943.2 583.3h2.8v2.8h-2.8zM927.9 590.6h2.8v2.8h-2.8zM926.7 591.4h2.8v2.8h-2.8zM930.9 592.9h2.8v2.8h-2.8zM925.5 592.3h2.8v2.8h-2.8zM951.9 588.3h2.8v2.8h-2.8zM967.7 591.6h2.8v2.8h-2.8zM983.3 589.8h2.8v2.8h-2.8zM959.7 594.4h2.8v2.8h-2.8zM971.9 579.0h2.8v2.8h-2.8zM982.3 589.6h2.8v2.8h-2.8zM980.2 583.8h2.8v2.8h-2.8zM978.4 590.7h2.8v2.8h-2.8zM965.8 580.1h2.8v2.8h-2.8zM975.0 578.6h2.8v2.8h-2.8zM965.7 594.9h2.8v2.8h-2.8zM974.4 586.4h2.8v2.8h-2.8zM967.8 586.9h2.8v2.8h-2.8zM962.7 581.1h2.8v2.8h-2.8zM957.8 586.4h2.8v2.8h-2.8zM965.2 589.5h2.8v2.8h-2.8zM971.9 585.9h2.8v2.8h-2.8zM968.4 578.9h2.8v2.8h-2.8zM965.1 582.6h2.8v2.8h-2.8zM975.0 580.9h2.8v2.8h-2.8zM960.6 581.9h2.8v2.8h-2.8zM970.3 581.6h2.8v2.8h-2.8zM961.0 583.7h2.8v2.8h-2.8zM968.1 580.2h2.8v2.8h-2.8zM959.1 586.8h2.8v2.8h-2.8zM966.1 588.1h2.8v2.8h-2.8zM962.4 589.2h2.8v2.8h-2.8zM965.5 579.9h2.8v2.8h-2.8zM962.3 593.1h2.8v2.8h-2.8zM962.0 594.9h2.8v2.8h-2.8zM975.1 589.8h2.8v2.8h-2.8zM969.4 586.9h2.8v2.8h-2.8zM978.6 588.0h2.8v2.8h-2.8zM972.5 579.0h2.8v2.8h-2.8zM958.1 582.3h2.8v2.8h-2.8zM959.1 580.0h2.8v2.8h-2.8zM974.1 579.0h2.8v2.8h-2.8zM963.6 585.7h2.8v2.8h-2.8zM965.6 590.3h2.8v2.8h-2.8zM970.1 588.9h2.8v2.8h-2.8zM965.5 585.6h2.8v2.8h-2.8zM964.2 581.2h2.8v2.8h-2.8zM993.1 588.4h2.8v2.8h-2.8zM990.8 588.9h2.8v2.8h-2.8zM997.3 588.4h2.8v2.8h-2.8zM1010.1 579.0h2.8v2.8h-2.8zM1006.8 585.9h2.8v2.8h-2.8zM987.3 587.1h2.8v2.8h-2.8zM1000.4 587.0h2.8v2.8h-2.8zM992.6 588.6h2.8v2.8h-2.8zM1009.4 587.0h2.8v2.8h-2.8zM1013.8 587.2h2.8v2.8h-2.8zM1012.9 584.3h2.8v2.8h-2.8zM998.4 588.7h2.8v2.8h-2.8zM1003.5 587.9h2.8v2.8h-2.8zM1006.6 587.9h2.8v2.8h-2.8zM1025.4 587.6h2.8v2.8h-2.8zM1015.4 588.1h2.8v2.8h-2.8zM1027.2 582.9h2.8v2.8h-2.8zM1024.9 583.3h2.8v2.8h-2.8zM1025.4 585.7h2.8v2.8h-2.8zM1019.7 585.7h2.8v2.8h-2.8zM1031.1 600.0h2.8v2.8h-2.8zM1033.7 603.9h2.8v2.8h-2.8zM1038.2 611.3h2.8v2.8h-2.8zM1033.1 599.8h2.8v2.8h-2.8zM1038.9 610.4h2.8v2.8h-2.8z"/>
<path fill="#00f090" d="M887.6 137.6h2.8v2.8h-2.8zM895.6 141.6h2.8v2.8h-2.8zM902.6 142.6h2.8v2.8h-2.8zM909.6 143.1h2.8v2.8h-2.8zM916.6 143.6h2.8v2.8h-2.8zM920.6 140.1h2.8v2.8h-2.8zM928.6 143.6h2.8v2.8h-2.8zM935.6 144.6h2.8v2.8h-2.8zM939.6 145.1h2.8v2.8h-2.8zM946.6 145.1h2.8v2.8h-2.8zM953.6 146.1h2.8v2.8h-2.8zM960.6 146.1h2.8v2.8h-2.8zM968.6 142.6h2.8v2.8h-2.8zM972.6 143.1h2.8v2.8h-2.8zM979.6 143.6h2.8v2.8h-2.8zM836.2 137.8h2.8v2.8h-2.8zM834.2 167.9h2.8v2.8h-2.8zM1030.6 127.6h2.8v2.8h-2.8zM1027.0 150.8h2.8v2.8h-2.8zM1032.6 174.6h2.8v2.8h-2.8zM1035.6 176.6h2.8v2.8h-2.8zM1038.6 178.6h2.8v2.8h-2.8zM1041.6 179.6h2.8v2.8h-2.8zM1034.8 194.5h2.8v2.8h-2.8zM1036.7 224.3h2.8v2.8h-2.8zM1035.8 249.9h2.8v2.8h-2.8zM1039.2 261.3h2.8v2.8h-2.8zM1036.0 263.2h2.8v2.8h-2.8zM1039.0 260.0h2.8v2.8h-2.8zM1035.8 261.0h2.8v2.8h-2.8zM810.6 274.4h2.8v2.8h-2.8zM836.4 274.6h2.8v2.8h-2.8zM819.4 274.0h2.8v2.8h-2.8zM844.3 277.7h2.8v2.8h-2.8zM817.0 277.6h2.8v2.8h-2.8zM1061.6 269.1h2.8v2.8h-2.8zM1046.2 268.8h2.8v2.8h-2.8zM1084.6 268.6h2.8v2.8h-2.8zM1047.3 268.2h2.8v2.8h-2.8zM1055.2 271.4h2.8v2.8h-2.8zM1045.4 274.3h2.8v2.8h-2.8zM839.4 340.1h2.8v2.8h-2.8zM841.0 344.2h2.8v2.8h-2.8zM841.4 347.6h2.8v2.8h-2.8zM841.1 354.4h2.8v2.8h-2.8zM841.1 356.8h2.8v2.8h-2.8zM838.2 355.9h2.8v2.8h-2.8zM840.6 361.8h2.8v2.8h-2.8zM839.0 362.5h2.8v2.8h-2.8zM840.4 364.9h2.8v2.8h-2.8zM840.3 369.8h2.8v2.8h-2.8zM841.4 372.7h2.8v2.8h-2.8zM840.1 375.6h2.8v2.8h-2.8zM841.6 375.0h2.8v2.8h-2.8zM840.3 382.5h2.8v2.8h-2.8zM839.7 385.6h2.8v2.8h-2.8zM841.0 388.7h2.8v2.8h-2.8zM840.3 387.4h2.8v2.8h-2.8zM841.5 392.2h2.8v2.8h-2.8zM841.3 392.1h2.8v2.8h-2.8zM839.9 398.9h2.8v2.8h-2.8zM840.5 400.2h2.8v2.8h-2.8zM838.9 410.4h2.8v2.8h-2.8zM839.9 412.2h2.8v2.8h-2.8zM839.4 421.1h2.8v2.8h-2.8zM842.4 430.1h2.8v2.8h-2.8zM839.2 431.1h2.8v2.8h-2.8zM841.5 432.3h2.8v2.8h-2.8zM839.3 437.3h2.8v2.8h-2.8zM839.8 439.8h2.8v2.8h-2.8zM839.5 440.7h2.8v2.8h-2.8zM837.7 446.3h2.8v2.8h-2.8zM838.3 452.6h2.8v2.8h-2.8zM839.7 455.6h2.8v2.8h-2.8zM840.5 457.1h2.8v2.8h-2.8zM840.4 457.9h2.8v2.8h-2.8zM841.3 461.0h2.8v2.8h-2.8zM840.3 467.3h2.8v2.8h-2.8zM839.8 473.5h2.8v2.8h-2.8zM841.6 476.0h2.8v2.8h-2.8zM840.5 476.5h2.8v2.8h-2.8zM839.2 476.8h2.8v2.8h-2.8zM841.1 479.7h2.8v2.8h-2.8zM839.4 481.6h2.8v2.8h-2.8zM841.6 481.6h2.8v2.8h-2.8zM840.6 482.9h2.8v2.8h-2.8zM839.9 485.2h2.8v2.8h-2.8zM840.7 487.0h2.8v2.8h-2.8zM839.7 489.0h2.8v2.8h-2.8zM841.2 493.2h2.8v2.8h-2.8zM839.5 493.0h2.8v2.8h-2.8zM840.5 497.3h2.8v2.8h-2.8zM840.0 499.4h2.8v2.8h-2.8zM840.4 500.6h2.8v2.8h-2.8zM842.2 507.0h2.8v2.8h-2.8zM842.6 511.0h2.8v2.8h-2.8zM839.8 514.2h2.8v2.8h-2.8zM839.3 516.4h2.8v2.8h-2.8zM843.1 517.5h2.8v2.8h-2.8zM840.3 530.0h2.8v2.8h-2.8zM840.0 530.7h2.8v2.8h-2.8zM840.0 532.9h2.8v2.8h-2.8zM842.1 535.7h2.8v2.8h-2.8zM841.9 537.4h2.8v2.8h-2.8zM840.4 537.2h2.8v2.8h-2.8zM840.4 541.0h2.8v2.8h-2.8zM841.4 549.9h2.8v2.8h-2.8zM842.1 551.0h2.8v2.8h-2.8zM842.1 556.3h2.8v2.8h-2.8zM842.5 559.8h2.8v2.8h-2.8zM842.0 564.1h2.8v2.8h-2.8zM843.4 568.1h2.8v2.8h-2.8zM846.3 570.2h2.8v2.8h-2.8zM844.2 572.8h2.8v2.8h-2.8zM845.5 573.0h2.8v2.8h-2.8zM1036.1 342.7h2.8v2.8h-2.8zM1037.2 350.8h2.8v2.8h-2.8zM1036.0 354.3h2.8v2.8h-2.8zM1036.1 358.4h2.8v2.8h-2.8zM1037.8 362.8h2.8v2.8h-2.8zM1041.1 366.5h2.8v2.8h-2.8zM1041.4 371.3h2.8v2.8h-2.8zM1039.5 374.3h2.8v2.8h-2.8zM1037.7 378.7h2.8v2.8h-2.8zM1042.2 383.6h2.8v2.8h-2.8zM1038.2 386.8h2.8v2.8h-2.8zM1042.2 391.4h2.8v2.8h-2.8zM1040.3 394.4h2.8v2.8h-2.8zM1042.4 395.8h2.8v2.8h-2.8zM1038.5 397.8h2.8v2.8h-2.8zM1040.2 398.4h2.8v2.8h-2.8zM1043.0 407.2h2.8v2.8h-2.8zM1040.9 410.9h2.8v2.8h-2.8zM1041.6 414.7h2.8v2.8h-2.8zM1043.6 414.6h2.8v2.8h-2.8zM1045.4 416.1h2.8v2.8h-2.8zM1040.2 422.1h2.8v2.8h-2.8zM1044.4 423.4h2.8v2.8h-2.8zM1044.6 431.7h2.8v2.8h-2.8zM1041.3 433.9h2.8v2.8h-2.8zM1043.8 438.4h2.8v2.8h-2.8zM1045.6 439.2h2.8v2.8h-2.8zM1045.8 442.8h2.8v2.8h-2.8zM1043.3 447.0h2.8v2.8h-2.8zM1044.4 455.4h2.8v2.8h-2.8zM1044.3 459.3h2.8v2.8h-2.8zM1046.8 458.9h2.8v2.8h-2.8zM1042.8 462.4h2.8v2.8h-2.8zM1044.6 462.8h2.8v2.8h-2.8zM1042.6 470.4h2.8v2.8h-2.8zM1043.2 474.9h2.8v2.8h-2.8zM1042.9 478.7h2.8v2.8h-2.8zM1045.3 479.6h2.8v2.8h-2.8zM1045.1 483.7h2.8v2.8h-2.8zM1046.8 491.7h2.8v2.8h-2.8zM1044.3 495.5h2.8v2.8h-2.8zM1046.0 499.5h2.8v2.8h-2.8zM1045.4 503.3h2.8v2.8h-2.8zM1044.6 506.8h2.8v2.8h-2.8zM1047.4 507.3h2.8v2.8h-2.8zM1043.3 511.0h2.8v2.8h-2.8zM1045.7 510.6h2.8v2.8h-2.8zM1045.8 523.0h2.8v2.8h-2.8zM1042.8 530.7h2.8v2.8h-2.8zM1046.0 539.7h2.8v2.8h-2.8zM1044.2 543.2h2.8v2.8h-2.8zM1046.0 542.7h2.8v2.8h-2.8zM1047.7 543.8h2.8v2.8h-2.8zM1045.5 547.8h2.8v2.8h-2.8zM1045.9 554.9h2.8v2.8h-2.8zM1043.0 559.2h2.8v2.8h-2.8zM1045.2 558.7h2.8v2.8h-2.8zM1045.1 563.1h2.8v2.8h-2.8zM1047.8 567.4h2.8v2.8h-2.8zM1046.3 571.0h2.8v2.8h-2.8zM1046.6 575.1h2.8v2.8h-2.8zM1042.6 579.3h2.8v2.8h-2.8zM1044.7 583.2h2.8v2.8h-2.8zM1045.8 586.8h2.8v2.8h-2.8zM873.9 591.3h2.8v2.8h-2.8zM878.2 593.0h2.8v2.8h-2.8zM841.8 571.1h2.8v2.8h-2.8zM883.5 594.0h2.8v2.8h-2.8zM874.3 592.8h2.8v2.8h-2.8zM867.9 589.6h2.8v2.8h-2.8zM853.4 586.8h2.8v2.8h-2.8zM883.8 598.1h2.8v2.8h-2.8zM842.7 576.9h2.8v2.8h-2.8zM851.4 589.2h2.8v2.8h-2.8zM848.3 585.8h2.8v2.8h-2.8zM870.8 594.6h2.8v2.8h-2.8zM852.3 583.5h2.8v2.8h-2.8zM849.9 586.7h2.8v2.8h-2.8zM842.9 573.5h2.8v2.8h-2.8zM888.8 599.1h2.8v2.8h-2.8zM841.7 577.1h2.8v2.8h-2.8zM848.7 591.3h2.8v2.8h-2.8zM844.6 586.2h2.8v2.8h-2.8zM849.3 583.6h2.8v2.8h-2.8zM861.5 594.7h2.8v2.8h-2.8zM881.2 593.4h2.8v2.8h-2.8zM874.5 590.4h2.8v2.8h-2.8zM876.4 592.9h2.8v2.8h-2.8zM882.9 593.6h2.8v2.8h-2.8zM845.5 585.5h2.8v2.8h-2.8zM847.0 588.7h2.8v2.8h-2.8zM843.8 583.9h2.8v2.8h-2.8zM872.6 593.5h2.8v2.8h-2.8zM844.4 578.4h2.8v2.8h-2.8zM870.5 597.2h2.8v2.8h-2.8zM857.3 594.3h2.8v2.8h-2.8zM842.7 582.6h2.8v2.8h-2.8zM917.4 588.3h2.8v2.8h-2.8zM899.6 588.2h2.8v2.8h-2.8zM918.7 593.8h2.8v2.8h-2.8zM912.4 594.3h2.8v2.8h-2.8zM906.2 593.3h2.8v2.8h-2.8zM913.5 589.4h2.8v2.8h-2.8zM923.8 596.5h2.8v2.8h-2.8zM897.8 591.1h2.8v2.8h-2.8zM921.6 594.6h2.8v2.8h-2.8zM911.5 586.9h2.8v2.8h-2.8zM897.2 587.9h2.8v2.8h-2.8zM915.7 594.6h2.8v2.8h-2.8zM911.8 586.8h2.8v2.8h-2.8zM901.7 589.9h2.8v2.8h-2.8zM911.6 593.6h2.8v2.8h-2.8zM896.8 592.1h2.8v2.8h-2.8zM908.3 594.8h2.8v2.8h-2.8zM909.9 594.3h2.8v2.8h-2.8zM933.9 591.0h2.8v2.8h-2.8zM932.7 592.7h2.8v2.8h-2.8zM944.4 594.0h2.8v2.8h-2.8zM928.8 593.6h2.8v2.8h-2.8zM943.8 587.5h2.8v2.8h-2.8zM932.9 591.4h2.8v2.8h-2.8zM943.2 594.3h2.8v2.8h-2.8zM950.0 589.6h2.8v2.8h-2.8zM933.8 592.2h2.8v2.8h-2.8zM952.5 590.0h2.8v2.8h-2.8zM927.9 596.3h2.8v2.8h-2.8zM927.4 598.1h2.8v2.8h-2.8zM927.0 595.8h2.8v2.8h-2.8zM940.5 588.2h2.8v2.8h-2.8zM953.1 592.8h2.8v2.8h-2.8zM955.1 590.7h2.8v2.8h-2.8zM947.1 594.0h2.8v2.8h-2.8zM938.8 591.9h2.8v2.8h-2.8zM947.5 595.6h2.8v2.8h-2.8zM932.0 589.5h2.8v2.8h-2.8zM935.0 589.7h2.8v2.8h-2.8zM951.1 592.0h2.8v2.8h-2.8zM948.8 588.4h2.8v2.8h-2.8zM950.3 592.0h2.8v2.8h-2.8zM946.7 587.8h2.8v2.8h-2.8zM964.9 590.6h2.8v2.8h-2.8zM978.6 590.0h2.8v2.8h-2.8zM963.8 587.2h2.8v2.8h-2.8zM958.2 589.0h2.8v2.8h-2.8zM958.5 590.7h2.8v2.8h-2.8zM965.8 589.7h2.8v2.8h-2.8zM981.8 587.1h2.8v2.8h-2.8zM967.9 584.9h2.8v2.8h-2.8zM981.6 591.5h2.8v2.8h-2.8zM960.5 591.9h2.8v2.8h-2.8zM968.2 594.2h2.8v2.8h-2.8zM979.9 589.1h2.8v2.8h-2.8zM961.1 592.4h2.8v2.8h-2.8zM957.1 591.4h2.8v2.8h-2.8zM961.9 586.7h2.8v2.8h-2.8zM985.7 586.1h2.8v2.8h-2.8zM984.7 590.0h2.8v2.8h-2.8zM1016.4 583.9h2.8v2.8h-2.8zM992.3 587.5h2.8v2.8h-2.8zM989.0 583.2h2.8v2.8h-2.8zM1015.4 585.6h2.8v2.8h-2.8zM1004.6 586.0h2.8v2.8h-2.8zM1005.7 584.7h2.8v2.8h-2.8zM1013.3 585.3h2.8v2.8h-2.8zM1030.1 586.4h2.8v2.8h-2.8zM1047.4 585.9h2.8v2.8h-2.8zM1028.4 585.6h2.8v2.8h-2.8zM1031.7 584.8h2.8v2.8h-2.8zM1036.2 587.1h2.8v2.8h-2.8zM1017.0 587.2h2.8v2.8h-2.8zM1046.3 585.6h2.8v2.8h-2.8zM1044.6 586.1h2.8v2.8h-2.8zM1034.7 585.8h2.8v2.8h-2.8zM1026.9 588.1h2.8v2.8h-2.8zM1024.7 587.2h2.8v2.8h-2.8zM1032.4 584.6h2.8v2.8h-2.8zM1046.3 582.9h2.8v2.8h-2.8zM1031.6 584.0h2.8v2.8h-2.8zM1013.0 588.6h2.8v2.8h-2.8zM1024.2 586.6h2.8v2.8h-2.8zM1022.2 587.3h2.8v2.8h-2.8zM1017.2 587.0h2.8v2.8h-2.8zM1043.6 580.5h2.8v2.8h-2.8zM1036.8 582.1h2.8v2.8h-2.8zM1047.9 585.4h2.8v2.8h-2.8z"/>
<path fill="#00e4e4" d="M843.6 97.6h2.8v2.8h-2.8zM850.6 96.6h2.8v2.8h-2.8zM857.6 94.6h2.8v2.8h-2.8zM859.6 93.6h2.8v2.8h-2.8zM865.6 98.6h2.8v2.8h-2.8zM867.6 97.6h2.8v2.8h-2.8zM872.6 95.6h2.8v2.8h-2.8zM874.6 94.6h2.8v2.8h-2.8zM880.6 106.6h2.8v2.8h-2.8zM996.6 98.6h2.8v2.8h-2.8zM1003.6 97.6h2.8v2.8h-2.8zM1005.6 96.6h2.8v2.8h-2.8zM1008.6 96.6h2.8v2.8h-2.8zM1011.6 95.1h2.8v2.8h-2.8zM1019.6 94.6h2.8v2.8h-2.8zM1020.6 96.6h2.8v2.8h-2.8zM1028.6 96.6h2.8v2.8h-2.8zM1031.6 96.6h2.8v2.8h-2.8zM1034.6 98.6h2.8v2.8h-2.8zM988.6 105.1h2.8v2.8h-2.8zM887.6 110.6h2.8v2.8h-2.8zM894.6 114.6h2.8v2.8h-2.8zM902.6 115.1h2.8v2.8h-2.8zM909.6 115.6h2.8v2.8h-2.8zM917.6 115.6h2.8v2.8h-2.8zM924.6 120.1h2.8v2.8h-2.8zM931.6 116.6h2.8v2.8h-2.8zM939.6 117.1h2.8v2.8h-2.8zM942.6 120.6h2.8v2.8h-2.8zM950.6 114.1h2.8v2.8h-2.8zM957.6 118.6h2.8v2.8h-2.8zM965.6 122.6h2.8v2.8h-2.8zM972.6 119.1h2.8v2.8h-2.8zM980.6 120.1h2.8v2.8h-2.8zM839.6 133.6h2.8v2.8h-2.8zM838.6 162.6h2.8v2.8h-2.8zM837.2 137.2h2.8v2.8h-2.8zM835.4 166.7h2.8v2.8h-2.8zM839.7 192.9h2.8v2.8h-2.8zM840.6 230.9h2.8v2.8h-2.8zM833.7 216.8h2.8v2.8h-2.8zM837.2 251.7h2.8v2.8h-2.8zM841.0 265.0h2.8v2.8h-2.8zM841.2 266.0h2.8v2.8h-2.8zM1029.6 150.4h2.8v2.8h-2.8zM1032.6 167.6h2.8v2.8h-2.8zM1036.6 166.6h2.8v2.8h-2.8zM1039.6 165.6h2.8v2.8h-2.8zM1036.9 194.7h2.8v2.8h-2.8zM1039.0 193.4h2.8v2.8h-2.8zM1035.4 208.8h2.8v2.8h-2.8zM1023.1 212.2h2.8v2.8h-2.8zM1041.8 211.1h2.8v2.8h-2.8zM1030.5 211.9h2.8v2.8h-2.8zM1039.2 223.8h2.8v2.8h-2.8zM1027.1 235.4h2.8v2.8h-2.8zM1035.7 240.2h2.8v2.8h-2.8zM1038.0 249.1h2.8v2.8h-2.8zM1040.6 249.4h2.8v2.8h-2.8zM1034.9 261.5h2.8v2.8h-2.8zM1040.5 263.3h2.8v2.8h-2.8zM1041.8 263.5h2.8v2.8h-2.8zM836.8 271.2h2.8v2.8h-2.8zM843.1 271.4h2.8v2.8h-2.8zM823.8 271.3h2.8v2.8h-2.8zM833.4 271.4h2.8v2.8h-2.8zM830.3 274.2h2.8v2.8h-2.8zM822.2 274.8h2.8v2.8h-2.8zM831.7 275.2h2.8v2.8h-2.8zM823.8 274.1h2.8v2.8h-2.8zM836.5 274.9h2.8v2.8h-2.8zM838.6 275.1h2.8v2.8h-2.8zM824.5 274.1h2.8v2.8h-2.8zM814.6 274.6h2.8v2.8h-2.8zM826.9 274.2h2.8v2.8h-2.8zM821.4 275.0h2.8v2.8h-2.8zM828.2 275.2h2.8v2.8h-2.8zM808.3 274.6h2.8v2.8h-2.8zM830.3 278.0h2.8v2.8h-2.8zM827.3 277.6h2.8v2.8h-2.8zM821.8 277.5h2.8v2.8h-2.8zM825.4 277.6h2.8v2.8h-2.8zM819.5 277.7h2.8v2.8h-2.8zM806.8 277.2h2.8v2.8h-2.8zM825.2 277.9h2.8v2.8h-2.8zM837.9 261.6h2.8v2.8h-2.8zM1089.5 268.1h2.8v2.8h-2.8zM1045.7 268.9h2.8v2.8h-2.8zM1031.0 268.4h2.8v2.8h-2.8zM1062.5 268.3h2.8v2.8h-2.8zM1044.8 269.0h2.8v2.8h-2.8zM1030.6 271.4h2.8v2.8h-2.8zM1034.1 272.0h2.8v2.8h-2.8zM1066.5 271.7h2.8v2.8h-2.8zM1022.8 272.1h2.8v2.8h-2.8zM1070.6 271.1h2.8v2.8h-2.8zM1028.2 271.6h2.8v2.8h-2.8zM1058.5 271.2h2.8v2.8h-2.8zM1052.6 271.6h2.8v2.8h-2.8zM1090.2 272.1h2.8v2.8h-2.8zM1033.9 272.1h2.8v2.8h-2.8zM1030.6 272.0h2.8v2.8h-2.8zM1052.4 271.2h2.8v2.8h-2.8zM1046.8 271.4h2.8v2.8h-2.8zM1039.5 272.1h2.8v2.8h-2.8zM1058.2 273.7h2.8v2.8h-2.8zM1060.2 274.1h2.8v2.8h-2.8zM1037.3 274.0h2.8v2.8h-2.8zM1043.4 273.9h2.8v2.8h-2.8zM1068.2 274.0h2.8v2.8h-2.8zM1064.9 274.2h2.8v2.8h-2.8zM1047.6 274.5h2.8v2.8h-2.8zM1030.7 273.5h2.8v2.8h-2.8zM1045.6 273.7h2.8v2.8h-2.8zM842.0 342.1h2.8v2.8h-2.8zM841.3 342.5h2.8v2.8h-2.8zM839.9 343.2h2.8v2.8h-2.8zM841.3 349.9h2.8v2.8h-2.8zM841.6 350.0h2.8v2.8h-2.8zM842.8 353.0h2.8v2.8h-2.8zM841.8 357.0h2.8v2.8h-2.8zM843.5 356.6h2.8v2.8h-2.8zM841.3 360.6h2.8v2.8h-2.8zM839.7 364.0h2.8v2.8h-2.8zM840.5 368.5h2.8v2.8h-2.8zM841.7 373.1h2.8v2.8h-2.8zM843.1 373.1h2.8v2.8h-2.8zM840.3 376.6h2.8v2.8h-2.8zM841.8 377.5h2.8v2.8h-2.8zM841.8 382.3h2.8v2.8h-2.8zM843.2 387.2h2.8v2.8h-2.8zM842.6 388.3h2.8v2.8h-2.8zM841.8 387.1h2.8v2.8h-2.8zM841.6 392.2h2.8v2.8h-2.8zM841.1 395.5h2.8v2.8h-2.8zM843.1 400.3h2.8v2.8h-2.8zM840.1 402.7h2.8v2.8h-2.8zM838.9 402.9h2.8v2.8h-2.8zM841.2 402.5h2.8v2.8h-2.8zM842.0 402.8h2.8v2.8h-2.8zM845.8 405.3h2.8v2.8h-2.8zM840.3 407.6h2.8v2.8h-2.8zM841.5 406.0h2.8v2.8h-2.8zM841.7 406.2h2.8v2.8h-2.8zM843.9 408.1h2.8v2.8h-2.8zM840.2 410.5h2.8v2.8h-2.8zM842.2 410.1h2.8v2.8h-2.8zM840.1 413.3h2.8v2.8h-2.8zM840.2 414.2h2.8v2.8h-2.8zM843.4 415.0h2.8v2.8h-2.8zM843.0 416.1h2.8v2.8h-2.8zM840.3 418.1h2.8v2.8h-2.8zM843.1 417.9h2.8v2.8h-2.8zM842.7 419.8h2.8v2.8h-2.8zM843.1 419.5h2.8v2.8h-2.8zM842.8 421.5h2.8v2.8h-2.8zM842.0 421.8h2.8v2.8h-2.8zM844.3 424.5h2.8v2.8h-2.8zM842.8 423.7h2.8v2.8h-2.8zM841.9 422.9h2.8v2.8h-2.8zM842.4 425.4h2.8v2.8h-2.8zM842.5 426.2h2.8v2.8h-2.8zM841.6 428.1h2.8v2.8h-2.8zM842.5 429.6h2.8v2.8h-2.8zM840.6 432.7h2.8v2.8h-2.8zM839.9 434.2h2.8v2.8h-2.8zM842.4 434.1h2.8v2.8h-2.8zM843.5 436.8h2.8v2.8h-2.8zM843.9 438.2h2.8v2.8h-2.8zM845.1 441.0h2.8v2.8h-2.8zM843.0 439.7h2.8v2.8h-2.8zM842.7 442.7h2.8v2.8h-2.8zM845.1 442.2h2.8v2.8h-2.8zM842.4 445.6h2.8v2.8h-2.8zM844.3 444.5h2.8v2.8h-2.8zM842.7 447.4h2.8v2.8h-2.8zM842.4 447.6h2.8v2.8h-2.8zM840.6 448.9h2.8v2.8h-2.8zM839.3 449.5h2.8v2.8h-2.8zM845.4 450.2h2.8v2.8h-2.8zM842.5 449.9h2.8v2.8h-2.8zM841.1 452.8h2.8v2.8h-2.8zM839.8 453.8h2.8v2.8h-2.8zM841.7 453.0h2.8v2.8h-2.8zM842.7 452.4h2.8v2.8h-2.8zM843.9 454.7h2.8v2.8h-2.8zM841.3 456.3h2.8v2.8h-2.8zM844.3 458.7h2.8v2.8h-2.8zM841.7 458.7h2.8v2.8h-2.8zM842.1 462.3h2.8v2.8h-2.8zM843.0 463.0h2.8v2.8h-2.8zM844.5 465.8h2.8v2.8h-2.8zM840.9 465.7h2.8v2.8h-2.8zM845.8 465.6h2.8v2.8h-2.8zM839.9 468.1h2.8v2.8h-2.8zM841.8 468.0h2.8v2.8h-2.8zM843.8 467.0h2.8v2.8h-2.8zM843.4 470.8h2.8v2.8h-2.8zM840.3 469.6h2.8v2.8h-2.8zM841.5 470.3h2.8v2.8h-2.8zM841.8 472.2h2.8v2.8h-2.8zM843.3 471.9h2.8v2.8h-2.8zM845.3 471.2h2.8v2.8h-2.8zM839.9 472.6h2.8v2.8h-2.8zM844.3 474.6h2.8v2.8h-2.8zM841.0 473.7h2.8v2.8h-2.8zM843.6 477.1h2.8v2.8h-2.8zM841.3 476.2h2.8v2.8h-2.8zM843.9 477.2h2.8v2.8h-2.8zM840.3 478.9h2.8v2.8h-2.8zM842.9 482.6h2.8v2.8h-2.8zM844.2 483.7h2.8v2.8h-2.8zM844.5 487.4h2.8v2.8h-2.8zM842.7 489.2h2.8v2.8h-2.8zM843.8 491.1h2.8v2.8h-2.8zM841.3 491.5h2.8v2.8h-2.8zM845.4 493.7h2.8v2.8h-2.8zM844.5 495.0h2.8v2.8h-2.8zM846.4 495.9h2.8v2.8h-2.8zM843.4 495.8h2.8v2.8h-2.8zM842.4 496.9h2.8v2.8h-2.8zM841.9 498.3h2.8v2.8h-2.8zM842.1 498.7h2.8v2.8h-2.8zM843.4 501.6h2.8v2.8h-2.8zM843.1 501.2h2.8v2.8h-2.8zM843.7 504.2h2.8v2.8h-2.8zM843.5 504.3h2.8v2.8h-2.8zM844.4 504.6h2.8v2.8h-2.8zM840.7 505.1h2.8v2.8h-2.8zM841.6 506.8h2.8v2.8h-2.8zM843.3 510.0h2.8v2.8h-2.8zM844.5 511.9h2.8v2.8h-2.8zM842.8 516.5h2.8v2.8h-2.8zM843.1 520.7h2.8v2.8h-2.8zM841.7 522.0h2.8v2.8h-2.8zM843.0 522.1h2.8v2.8h-2.8zM843.5 523.4h2.8v2.8h-2.8zM841.3 530.7h2.8v2.8h-2.8zM844.9 533.8h2.8v2.8h-2.8zM844.1 533.1h2.8v2.8h-2.8zM844.7 533.8h2.8v2.8h-2.8zM846.8 535.2h2.8v2.8h-2.8zM843.3 535.2h2.8v2.8h-2.8zM843.9 534.1h2.8v2.8h-2.8zM841.9 536.1h2.8v2.8h-2.8zM846.1 537.5h2.8v2.8h-2.8zM846.5 541.1h2.8v2.8h-2.8zM843.5 540.6h2.8v2.8h-2.8zM842.8 540.7h2.8v2.8h-2.8zM846.9 545.6h2.8v2.8h-2.8zM840.9 545.9h2.8v2.8h-2.8zM841.2 548.3h2.8v2.8h-2.8zM844.0 547.9h2.8v2.8h-2.8zM841.3 549.0h2.8v2.8h-2.8zM842.7 550.0h2.8v2.8h-2.8zM846.7 549.8h2.8v2.8h-2.8zM842.4 550.6h2.8v2.8h-2.8zM842.3 552.5h2.8v2.8h-2.8zM844.2 553.4h2.8v2.8h-2.8zM844.8 554.8h2.8v2.8h-2.8zM842.0 555.2h2.8v2.8h-2.8zM842.4 558.4h2.8v2.8h-2.8zM846.7 559.3h2.8v2.8h-2.8zM846.3 562.2h2.8v2.8h-2.8zM845.0 563.8h2.8v2.8h-2.8zM846.8 567.3h2.8v2.8h-2.8zM844.0 566.0h2.8v2.8h-2.8zM847.0 570.7h2.8v2.8h-2.8zM849.3 572.9h2.8v2.8h-2.8zM844.4 573.3h2.8v2.8h-2.8zM848.3 572.4h2.8v2.8h-2.8zM846.9 574.3h2.8v2.8h-2.8zM848.4 575.4h2.8v2.8h-2.8zM847.9 576.9h2.8v2.8h-2.8zM1039.4 347.5h2.8v2.8h-2.8zM1039.0 351.3h2.8v2.8h-2.8zM1038.6 354.8h2.8v2.8h-2.8zM1040.5 354.6h2.8v2.8h-2.8zM1038.8 358.1h2.8v2.8h-2.8zM1042.1 359.2h2.8v2.8h-2.8zM1040.6 363.7h2.8v2.8h-2.8zM1042.7 374.9h2.8v2.8h-2.8zM1040.4 382.5h2.8v2.8h-2.8zM1044.4 384.1h2.8v2.8h-2.8zM1043.9 391.4h2.8v2.8h-2.8zM1041.1 403.1h2.8v2.8h-2.8zM1044.0 403.1h2.8v2.8h-2.8zM1044.8 408.0h2.8v2.8h-2.8zM1043.5 410.6h2.8v2.8h-2.8zM1044.5 411.5h2.8v2.8h-2.8zM1047.8 416.6h2.8v2.8h-2.8zM1043.1 419.4h2.8v2.8h-2.8zM1044.7 418.6h2.8v2.8h-2.8zM1046.2 423.0h2.8v2.8h-2.8zM1043.5 427.7h2.8v2.8h-2.8zM1045.8 427.9h2.8v2.8h-2.8zM1045.0 434.9h2.8v2.8h-2.8zM1047.0 436.2h2.8v2.8h-2.8zM1047.3 439.5h2.8v2.8h-2.8zM1042.9 443.2h2.8v2.8h-2.8zM1045.5 447.1h2.8v2.8h-2.8zM1045.3 451.1h2.8v2.8h-2.8zM1047.4 452.1h2.8v2.8h-2.8zM1045.8 455.0h2.8v2.8h-2.8zM1048.3 460.3h2.8v2.8h-2.8zM1049.1 464.1h2.8v2.8h-2.8zM1044.9 466.4h2.8v2.8h-2.8zM1049.1 471.2h2.8v2.8h-2.8zM1046.2 475.6h2.8v2.8h-2.8zM1047.9 476.3h2.8v2.8h-2.8zM1047.6 479.4h2.8v2.8h-2.8zM1046.8 484.0h2.8v2.8h-2.8zM1049.2 484.0h2.8v2.8h-2.8zM1044.7 487.3h2.8v2.8h-2.8zM1046.7 487.4h2.8v2.8h-2.8zM1044.3 490.4h2.8v2.8h-2.8zM1046.4 494.9h2.8v2.8h-2.8zM1048.2 495.6h2.8v2.8h-2.8zM1047.6 500.0h2.8v2.8h-2.8zM1047.4 503.0h2.8v2.8h-2.8zM1045.2 514.9h2.8v2.8h-2.8zM1044.7 519.3h2.8v2.8h-2.8zM1048.4 519.4h2.8v2.8h-2.8zM1045.5 526.7h2.8v2.8h-2.8zM1046.4 531.5h2.8v2.8h-2.8zM1046.9 536.0h2.8v2.8h-2.8zM1047.4 539.5h2.8v2.8h-2.8zM1047.3 547.2h2.8v2.8h-2.8zM1045.1 550.4h2.8v2.8h-2.8zM1048.4 551.6h2.8v2.8h-2.8zM1047.6 559.5h2.8v2.8h-2.8zM1045.1 567.1h2.8v2.8h-2.8zM1048.2 572.2h2.8v2.8h-2.8zM1047.4 579.5h2.8v2.8h-2.8zM1047.5 588.3h2.8v2.8h-2.8zM889.0 598.1h2.8v2.8h-2.8zM842.7 580.8h2.8v2.8h-2.8zM846.3 583.8h2.8v2.8h-2.8zM883.1 601.1h2.8v2.8h-2.8zM859.5 596.7h2.8v2.8h-2.8zM848.4 591.0h2.8v2.8h-2.8zM850.4 591.1h2.8v2.8h-2.8zM841.9 574.3h2.8v2.8h-2.8zM848.1 583.2h2.8v2.8h-2.8zM879.5 595.8h2.8v2.8h-2.8zM870.4 595.3h2.8v2.8h-2.8zM870.9 592.6h2.8v2.8h-2.8zM841.4 572.9h2.8v2.8h-2.8zM878.1 592.7h2.8v2.8h-2.8zM895.2 598.3h2.8v2.8h-2.8zM854.2 591.2h2.8v2.8h-2.8zM881.2 602.6h2.8v2.8h-2.8zM855.8 593.1h2.8v2.8h-2.8zM897.0 597.7h2.8v2.8h-2.8zM860.3 586.5h2.8v2.8h-2.8zM860.8 591.9h2.8v2.8h-2.8zM885.4 592.9h2.8v2.8h-2.8zM845.4 582.9h2.8v2.8h-2.8zM854.4 592.5h2.8v2.8h-2.8zM847.3 577.2h2.8v2.8h-2.8zM854.7 589.4h2.8v2.8h-2.8zM843.0 575.8h2.8v2.8h-2.8zM841.4 576.0h2.8v2.8h-2.8zM877.2 596.3h2.8v2.8h-2.8zM893.8 599.6h2.8v2.8h-2.8zM846.2 588.8h2.8v2.8h-2.8zM867.0 595.3h2.8v2.8h-2.8zM852.9 593.8h2.8v2.8h-2.8zM862.3 590.4h2.8v2.8h-2.8zM851.2 589.6h2.8v2.8h-2.8zM870.8 592.3h2.8v2.8h-2.8zM887.7 599.8h2.8v2.8h-2.8zM877.2 596.7h2.8v2.8h-2.8zM845.1 578.2h2.8v2.8h-2.8zM860.4 589.2h2.8v2.8h-2.8zM861.1 592.1h2.8v2.8h-2.8zM845.7 577.1h2.8v2.8h-2.8zM849.6 587.7h2.8v2.8h-2.8zM860.9 591.6h2.8v2.8h-2.8zM877.0 599.2h2.8v2.8h-2.8zM885.1 596.5h2.8v2.8h-2.8zM844.9 590.0h2.8v2.8h-2.8zM856.2 594.6h2.8v2.8h-2.8zM874.0 594.1h2.8v2.8h-2.8zM889.2 592.6h2.8v2.8h-2.8zM842.9 575.3h2.8v2.8h-2.8zM845.9 580.8h2.8v2.8h-2.8zM868.2 595.0h2.8v2.8h-2.8zM844.0 580.3h2.8v2.8h-2.8zM844.5 579.9h2.8v2.8h-2.8zM848.9 586.6h2.8v2.8h-2.8zM875.1 593.3h2.8v2.8h-2.8zM877.6 592.2h2.8v2.8h-2.8zM849.4 582.5h2.8v2.8h-2.8zM849.0 580.6h2.8v2.8h-2.8zM878.8 594.3h2.8v2.8h-2.8zM863.8 592.6h2.8v2.8h-2.8zM848.4 590.4h2.8v2.8h-2.8zM881.6 594.7h2.8v2.8h-2.8zM881.3 595.4h2.8v2.8h-2.8zM894.2 595.1h2.8v2.8h-2.8zM876.9 593.1h2.8v2.8h-2.8zM871.1 595.0h2.8v2.8h-2.8zM844.9 580.9h2.8v2.8h-2.8zM884.0 597.5h2.8v2.8h-2.8zM871.5 591.7h2.8v2.8h-2.8zM893.0 594.9h2.8v2.8h-2.8zM845.5 588.1h2.8v2.8h-2.8zM868.7 586.5h2.8v2.8h-2.8zM846.0 585.2h2.8v2.8h-2.8zM897.4 589.0h2.8v2.8h-2.8zM921.1 591.8h2.8v2.8h-2.8zM902.3 587.6h2.8v2.8h-2.8zM903.7 589.7h2.8v2.8h-2.8zM899.0 588.9h2.8v2.8h-2.8zM911.9 586.7h2.8v2.8h-2.8zM912.8 590.4h2.8v2.8h-2.8zM904.8 594.0h2.8v2.8h-2.8zM912.3 586.8h2.8v2.8h-2.8zM919.3 593.2h2.8v2.8h-2.8zM905.5 592.1h2.8v2.8h-2.8zM917.6 591.7h2.8v2.8h-2.8zM904.0 587.8h2.8v2.8h-2.8zM895.7 592.5h2.8v2.8h-2.8zM913.0 593.8h2.8v2.8h-2.8zM918.0 587.9h2.8v2.8h-2.8zM896.3 592.6h2.8v2.8h-2.8zM919.2 593.5h2.8v2.8h-2.8zM914.0 592.6h2.8v2.8h-2.8zM914.4 592.2h2.8v2.8h-2.8zM901.0 586.6h2.8v2.8h-2.8zM899.4 590.5h2.8v2.8h-2.8zM898.8 590.4h2.8v2.8h-2.8zM910.2 589.8h2.8v2.8h-2.8zM914.6 595.3h2.8v2.8h-2.8zM922.8 595.7h2.8v2.8h-2.8zM897.8 587.0h2.8v2.8h-2.8zM919.6 590.1h2.8v2.8h-2.8zM900.4 592.9h2.8v2.8h-2.8zM912.8 589.0h2.8v2.8h-2.8zM907.6 588.4h2.8v2.8h-2.8zM897.5 587.2h2.8v2.8h-2.8zM941.6 584.7h2.8v2.8h-2.8zM953.0 591.2h2.8v2.8h-2.8zM927.9 595.6h2.8v2.8h-2.8zM939.2 593.6h2.8v2.8h-2.8zM954.8 591.3h2.8v2.8h-2.8zM948.9 593.9h2.8v2.8h-2.8zM927.2 594.2h2.8v2.8h-2.8zM943.6 589.7h2.8v2.8h-2.8zM951.0 593.7h2.8v2.8h-2.8zM940.3 591.1h2.8v2.8h-2.8zM926.2 587.9h2.8v2.8h-2.8zM936.7 594.5h2.8v2.8h-2.8zM932.5 595.1h2.8v2.8h-2.8zM930.9 595.2h2.8v2.8h-2.8zM926.4 590.3h2.8v2.8h-2.8zM946.1 592.9h2.8v2.8h-2.8zM953.5 587.5h2.8v2.8h-2.8zM944.5 588.6h2.8v2.8h-2.8zM927.7 593.8h2.8v2.8h-2.8zM954.5 594.5h2.8v2.8h-2.8zM950.8 588.2h2.8v2.8h-2.8zM935.1 590.0h2.8v2.8h-2.8zM950.0 593.5h2.8v2.8h-2.8zM940.7 594.0h2.8v2.8h-2.8zM931.7 595.2h2.8v2.8h-2.8zM951.5 587.0h2.8v2.8h-2.8zM926.2 593.1h2.8v2.8h-2.8zM935.6 587.8h2.8v2.8h-2.8zM947.7 594.7h2.8v2.8h-2.8zM929.1 596.1h2.8v2.8h-2.8zM950.3 587.3h2.8v2.8h-2.8zM931.0 596.1h2.8v2.8h-2.8zM983.5 586.9h2.8v2.8h-2.8zM960.6 588.5h2.8v2.8h-2.8zM965.2 584.7h2.8v2.8h-2.8zM965.1 587.1h2.8v2.8h-2.8zM967.1 591.8h2.8v2.8h-2.8zM959.6 591.0h2.8v2.8h-2.8zM960.4 594.6h2.8v2.8h-2.8zM963.2 585.6h2.8v2.8h-2.8zM975.3 591.6h2.8v2.8h-2.8zM978.2 590.7h2.8v2.8h-2.8zM970.7 593.0h2.8v2.8h-2.8zM962.0 589.2h2.8v2.8h-2.8zM974.4 588.1h2.8v2.8h-2.8zM974.1 587.6h2.8v2.8h-2.8zM975.8 589.5h2.8v2.8h-2.8zM966.3 585.1h2.8v2.8h-2.8zM964.3 584.9h2.8v2.8h-2.8zM967.0 588.2h2.8v2.8h-2.8zM977.5 590.2h2.8v2.8h-2.8zM970.9 586.1h2.8v2.8h-2.8zM958.2 591.7h2.8v2.8h-2.8zM970.7 588.1h2.8v2.8h-2.8zM972.1 589.3h2.8v2.8h-2.8zM970.9 589.1h2.8v2.8h-2.8zM965.6 591.5h2.8v2.8h-2.8zM997.7 591.0h2.8v2.8h-2.8zM1010.4 588.4h2.8v2.8h-2.8zM994.8 592.0h2.8v2.8h-2.8zM984.4 588.1h2.8v2.8h-2.8zM1011.9 590.0h2.8v2.8h-2.8zM1011.5 589.5h2.8v2.8h-2.8zM1007.3 588.5h2.8v2.8h-2.8zM986.8 589.9h2.8v2.8h-2.8zM985.3 593.9h2.8v2.8h-2.8zM994.8 588.9h2.8v2.8h-2.8zM984.9 586.5h2.8v2.8h-2.8zM1000.0 586.8h2.8v2.8h-2.8zM996.2 587.1h2.8v2.8h-2.8zM991.0 590.6h2.8v2.8h-2.8zM1014.8 588.2h2.8v2.8h-2.8zM1011.8 592.0h2.8v2.8h-2.8zM998.2 587.3h2.8v2.8h-2.8zM996.6 584.4h2.8v2.8h-2.8zM1008.8 593.1h2.8v2.8h-2.8zM1011.2 593.4h2.8v2.8h-2.8zM998.5 587.8h2.8v2.8h-2.8zM1002.9 586.8h2.8v2.8h-2.8zM994.0 591.4h2.8v2.8h-2.8zM1010.5 585.8h2.8v2.8h-2.8zM995.7 591.4h2.8v2.8h-2.8zM1006.4 589.0h2.8v2.8h-2.8zM987.4 589.7h2.8v2.8h-2.8zM999.3 592.4h2.8v2.8h-2.8zM996.5 591.1h2.8v2.8h-2.8zM992.8 591.5h2.8v2.8h-2.8zM993.0 588.7h2.8v2.8h-2.8zM1005.5 587.6h2.8v2.8h-2.8zM997.7 586.1h2.8v2.8h-2.8zM1007.3 588.7h2.8v2.8h-2.8zM985.8 595.5h2.8v2.8h-2.8zM1004.1 594.0h2.8v2.8h-2.8zM981.5 583.4h2.8v2.8h-2.8zM1008.8 586.9h2.8v2.8h-2.8zM1007.4 588.6h2.8v2.8h-2.8zM983.2 587.4h2.8v2.8h-2.8zM984.2 590.3h2.8v2.8h-2.8zM1001.0 587.4h2.8v2.8h-2.8zM985.9 591.7h2.8v2.8h-2.8zM1012.3 585.0h2.8v2.8h-2.8zM1011.0 585.8h2.8v2.8h-2.8zM1002.3 589.3h2.8v2.8h-2.8zM998.2 590.1h2.8v2.8h-2.8zM1043.7 585.6h2.8v2.8h-2.8zM1046.5 585.1h2.8v2.8h-2.8zM1049.0 586.8h2.8v2.8h-2.8zM1027.3 585.8h2.8v2.8h-2.8zM1035.1 588.1h2.8v2.8h-2.8zM1025.7 590.7h2.8v2.8h-2.8zM1017.2 592.4h2.8v2.8h-2.8zM1044.0 586.4h2.8v2.8h-2.8zM1034.9 590.6h2.8v2.8h-2.8zM1037.4 586.8h2.8v2.8h-2.8zM1015.9 593.2h2.8v2.8h-2.8zM1047.7 581.5h2.8v2.8h-2.8zM1023.2 589.8h2.8v2.8h-2.8zM1027.7 586.8h2.8v2.8h-2.8zM1015.4 594.7h2.8v2.8h-2.8zM1021.5 591.4h2.8v2.8h-2.8zM1038.0 589.2h2.8v2.8h-2.8zM1012.0 587.2h2.8v2.8h-2.8zM1022.6 590.1h2.8v2.8h-2.8zM1040.3 586.3h2.8v2.8h-2.8zM1018.9 589.0h2.8v2.8h-2.8zM1046.9 581.5h2.8v2.8h-2.8zM1045.5 584.6h2.8v2.8h-2.8zM1033.1 584.7h2.8v2.8h-2.8zM1039.4 587.2h2.8v2.8h-2.8zM1022.4 585.8h2.8v2.8h-2.8zM1027.0 589.6h2.8v2.8h-2.8zM1036.8 587.5h2.8v2.8h-2.8zM1048.6 582.2h2.8v2.8h-2.8zM1028.6 589.0h2.8v2.8h-2.8zM1035.2 588.0h2.8v2.8h-2.8zM1029.1 587.7h2.8v2.8h-2.8zM870.6 601.6h2.8v2.8h-2.8zM875.6 604.6h2.8v2.8h-2.8zM880.6 605.6h2.8v2.8h-2.8zM886.6 604.6h2.8v2.8h-2.8zM853.6 598.6h2.8v2.8h-2.8zM932.6 601.6h2.8v2.8h-2.8zM998.6 598.6h2.8v2.8h-2.8z"/>
<path fill="#0090ff" d="M984.6 95.6h2.8v2.8h-2.8zM844.6 132.1h2.8v2.8h-2.8zM884.6 131.6h2.8v2.8h-2.8zM851.6 128.6h2.8v2.8h-2.8zM858.6 129.6h2.8v2.8h-2.8zM866.6 126.1h2.8v2.8h-2.8zM874.6 127.1h2.8v2.8h-2.8zM881.6 127.1h2.8v2.8h-2.8zM892.6 127.6h2.8v2.8h-2.8zM985.6 134.1h2.8v2.8h-2.8zM993.6 133.6h2.8v2.8h-2.8zM1000.6 134.1h2.8v2.8h-2.8zM838.8 135.3h2.8v2.8h-2.8zM840.1 135.1h2.8v2.8h-2.8zM836.5 165.8h2.8v2.8h-2.8zM837.6 164.4h2.8v2.8h-2.8zM840.2 191.6h2.8v2.8h-2.8zM841.8 230.7h2.8v2.8h-2.8zM834.5 247.7h2.8v2.8h-2.8zM837.7 267.1h2.8v2.8h-2.8zM830.9 265.4h2.8v2.8h-2.8zM1031.6 122.6h2.8v2.8h-2.8zM1034.6 124.6h2.8v2.8h-2.8zM1026.6 124.6h2.8v2.8h-2.8zM1008.6 122.6h2.8v2.8h-2.8zM1016.6 127.6h2.8v2.8h-2.8zM1023.6 123.6h2.8v2.8h-2.8zM1038.6 137.6h2.8v2.8h-2.8zM1041.6 136.6h2.8v2.8h-2.8zM1031.2 150.3h2.8v2.8h-2.8zM1032.6 150.0h2.8v2.8h-2.8zM1041.2 193.6h2.8v2.8h-2.8zM1029.0 212.2h2.8v2.8h-2.8zM1040.1 205.9h2.8v2.8h-2.8zM1041.0 223.0h2.8v2.8h-2.8zM1039.8 236.2h2.8v2.8h-2.8zM1028.3 237.7h2.8v2.8h-2.8zM1042.6 237.5h2.8v2.8h-2.8zM1042.2 249.4h2.8v2.8h-2.8zM1033.7 260.5h2.8v2.8h-2.8zM814.1 271.8h2.8v2.8h-2.8zM833.9 264.1h2.8v2.8h-2.8zM1074.6 269.0h2.8v2.8h-2.8zM1079.7 268.4h2.8v2.8h-2.8zM1058.4 268.6h2.8v2.8h-2.8zM1078.9 268.5h2.8v2.8h-2.8zM1035.1 268.6h2.8v2.8h-2.8zM1069.5 271.7h2.8v2.8h-2.8zM1092.7 272.1h2.8v2.8h-2.8zM1084.4 271.0h2.8v2.8h-2.8zM1045.4 271.2h2.8v2.8h-2.8zM1036.6 273.8h2.8v2.8h-2.8zM1056.0 274.1h2.8v2.8h-2.8zM842.9 339.3h2.8v2.8h-2.8zM842.9 344.9h2.8v2.8h-2.8zM842.4 349.1h2.8v2.8h-2.8zM843.5 352.3h2.8v2.8h-2.8zM844.3 358.8h2.8v2.8h-2.8zM843.5 367.2h2.8v2.8h-2.8zM844.0 369.0h2.8v2.8h-2.8zM845.4 375.7h2.8v2.8h-2.8zM845.1 374.8h2.8v2.8h-2.8zM842.8 378.5h2.8v2.8h-2.8zM841.9 379.1h2.8v2.8h-2.8zM843.9 383.0h2.8v2.8h-2.8zM842.8 385.1h2.8v2.8h-2.8zM844.3 393.6h2.8v2.8h-2.8zM845.4 400.4h2.8v2.8h-2.8zM843.3 400.6h2.8v2.8h-2.8zM845.2 406.9h2.8v2.8h-2.8zM844.7 410.1h2.8v2.8h-2.8zM844.7 416.2h2.8v2.8h-2.8zM843.9 417.4h2.8v2.8h-2.8zM844.2 416.3h2.8v2.8h-2.8zM844.1 419.3h2.8v2.8h-2.8zM844.9 420.7h2.8v2.8h-2.8zM845.7 424.1h2.8v2.8h-2.8zM845.1 430.5h2.8v2.8h-2.8zM846.2 429.8h2.8v2.8h-2.8zM844.1 436.4h2.8v2.8h-2.8zM843.9 435.5h2.8v2.8h-2.8zM844.3 437.7h2.8v2.8h-2.8zM844.5 441.1h2.8v2.8h-2.8zM845.5 441.8h2.8v2.8h-2.8zM845.2 445.8h2.8v2.8h-2.8zM844.5 455.3h2.8v2.8h-2.8zM845.0 461.6h2.8v2.8h-2.8zM845.9 473.6h2.8v2.8h-2.8zM846.1 474.0h2.8v2.8h-2.8zM845.0 480.0h2.8v2.8h-2.8zM843.2 483.4h2.8v2.8h-2.8zM846.1 484.5h2.8v2.8h-2.8zM845.2 487.7h2.8v2.8h-2.8zM845.7 496.6h2.8v2.8h-2.8zM845.5 499.7h2.8v2.8h-2.8zM845.7 510.1h2.8v2.8h-2.8zM846.9 512.0h2.8v2.8h-2.8zM846.2 513.1h2.8v2.8h-2.8zM845.8 518.1h2.8v2.8h-2.8zM845.8 520.7h2.8v2.8h-2.8zM844.6 521.5h2.8v2.8h-2.8zM844.7 525.4h2.8v2.8h-2.8zM845.0 526.4h2.8v2.8h-2.8zM846.4 526.6h2.8v2.8h-2.8zM845.5 526.1h2.8v2.8h-2.8zM844.3 528.2h2.8v2.8h-2.8zM846.3 530.6h2.8v2.8h-2.8zM846.7 543.4h2.8v2.8h-2.8zM845.4 551.5h2.8v2.8h-2.8zM844.0 554.1h2.8v2.8h-2.8zM845.9 556.5h2.8v2.8h-2.8zM846.2 556.9h2.8v2.8h-2.8zM846.7 563.6h2.8v2.8h-2.8zM848.4 571.3h2.8v2.8h-2.8zM848.8 573.6h2.8v2.8h-2.8zM848.0 574.4h2.8v2.8h-2.8zM850.3 577.4h2.8v2.8h-2.8zM1040.3 343.8h2.8v2.8h-2.8zM1042.4 343.3h2.8v2.8h-2.8zM1041.4 346.8h2.8v2.8h-2.8zM1041.6 351.7h2.8v2.8h-2.8zM1043.6 351.7h2.8v2.8h-2.8zM1044.5 355.4h2.8v2.8h-2.8zM1040.2 358.8h2.8v2.8h-2.8zM1042.6 362.8h2.8v2.8h-2.8zM1044.9 364.0h2.8v2.8h-2.8zM1043.0 367.8h2.8v2.8h-2.8zM1044.7 372.2h2.8v2.8h-2.8zM1042.3 379.5h2.8v2.8h-2.8zM1046.2 384.3h2.8v2.8h-2.8zM1042.5 387.6h2.8v2.8h-2.8zM1046.3 391.6h2.8v2.8h-2.8zM1046.2 400.3h2.8v2.8h-2.8zM1045.3 403.6h2.8v2.8h-2.8zM1046.6 412.0h2.8v2.8h-2.8zM1049.3 416.8h2.8v2.8h-2.8zM1046.6 420.3h2.8v2.8h-2.8zM1049.0 423.6h2.8v2.8h-2.8zM1048.1 428.1h2.8v2.8h-2.8zM1045.8 431.5h2.8v2.8h-2.8zM1048.0 431.7h2.8v2.8h-2.8zM1049.4 440.0h2.8v2.8h-2.8zM1046.8 443.6h2.8v2.8h-2.8zM1049.7 444.3h2.8v2.8h-2.8zM1047.6 447.6h2.8v2.8h-2.8zM1049.2 448.2h2.8v2.8h-2.8zM1049.5 451.8h2.8v2.8h-2.8zM1047.9 456.3h2.8v2.8h-2.8zM1050.2 460.0h2.8v2.8h-2.8zM1046.5 463.3h2.8v2.8h-2.8zM1048.7 468.0h2.8v2.8h-2.8zM1049.5 480.3h2.8v2.8h-2.8zM1050.9 485.1h2.8v2.8h-2.8zM1049.5 488.0h2.8v2.8h-2.8zM1051.3 488.1h2.8v2.8h-2.8zM1048.4 491.4h2.8v2.8h-2.8zM1051.2 492.9h2.8v2.8h-2.8zM1050.0 496.4h2.8v2.8h-2.8zM1052.1 497.2h2.8v2.8h-2.8zM1050.1 500.5h2.8v2.8h-2.8zM1051.7 500.3h2.8v2.8h-2.8zM1049.7 503.7h2.8v2.8h-2.8zM1052.0 504.6h2.8v2.8h-2.8zM1049.5 508.5h2.8v2.8h-2.8zM1051.0 508.1h2.8v2.8h-2.8zM1047.3 511.1h2.8v2.8h-2.8zM1050.0 512.7h2.8v2.8h-2.8zM1051.3 512.2h2.8v2.8h-2.8zM1047.8 515.1h2.8v2.8h-2.8zM1049.1 516.1h2.8v2.8h-2.8zM1046.3 519.6h2.8v2.8h-2.8zM1050.5 520.8h2.8v2.8h-2.8zM1047.7 523.8h2.8v2.8h-2.8zM1050.6 523.5h2.8v2.8h-2.8zM1051.9 524.1h2.8v2.8h-2.8zM1047.4 527.4h2.8v2.8h-2.8zM1050.5 528.4h2.8v2.8h-2.8zM1052.2 528.5h2.8v2.8h-2.8zM1048.7 532.2h2.8v2.8h-2.8zM1050.8 532.4h2.8v2.8h-2.8zM1048.9 536.3h2.8v2.8h-2.8zM1051.1 536.9h2.8v2.8h-2.8zM1049.2 539.4h2.8v2.8h-2.8zM1052.2 540.3h2.8v2.8h-2.8zM1049.9 544.0h2.8v2.8h-2.8zM1051.1 545.1h2.8v2.8h-2.8zM1049.5 548.4h2.8v2.8h-2.8zM1051.1 548.9h2.8v2.8h-2.8zM1046.7 551.8h2.8v2.8h-2.8zM1050.6 551.8h2.8v2.8h-2.8zM1047.5 555.4h2.8v2.8h-2.8zM1051.5 556.7h2.8v2.8h-2.8zM1049.5 559.9h2.8v2.8h-2.8zM1051.1 560.6h2.8v2.8h-2.8zM1047.1 563.7h2.8v2.8h-2.8zM1049.9 563.9h2.8v2.8h-2.8zM1051.4 563.9h2.8v2.8h-2.8zM1049.0 568.3h2.8v2.8h-2.8zM1051.6 568.7h2.8v2.8h-2.8zM1049.9 572.5h2.8v2.8h-2.8zM1051.9 572.4h2.8v2.8h-2.8zM1049.4 575.6h2.8v2.8h-2.8zM1051.4 577.0h2.8v2.8h-2.8zM1051.4 581.0h2.8v2.8h-2.8zM1047.6 583.2h2.8v2.8h-2.8zM1049.3 584.5h2.8v2.8h-2.8zM1051.0 583.8h2.8v2.8h-2.8zM1050.2 588.6h2.8v2.8h-2.8zM1051.7 588.8h2.8v2.8h-2.8zM849.4 589.3h2.8v2.8h-2.8zM869.1 597.4h2.8v2.8h-2.8zM854.9 589.7h2.8v2.8h-2.8zM892.8 596.5h2.8v2.8h-2.8zM850.2 587.4h2.8v2.8h-2.8zM882.4 596.3h2.8v2.8h-2.8zM847.0 589.3h2.8v2.8h-2.8zM886.4 597.2h2.8v2.8h-2.8zM859.9 594.3h2.8v2.8h-2.8zM888.5 597.4h2.8v2.8h-2.8zM864.5 594.1h2.8v2.8h-2.8zM876.4 595.1h2.8v2.8h-2.8zM856.7 594.0h2.8v2.8h-2.8zM890.1 596.4h2.8v2.8h-2.8zM850.4 588.4h2.8v2.8h-2.8zM887.8 596.2h2.8v2.8h-2.8zM852.1 594.0h2.8v2.8h-2.8zM844.2 577.5h2.8v2.8h-2.8zM864.5 592.5h2.8v2.8h-2.8zM988.0 590.9h2.8v2.8h-2.8zM990.6 591.6h2.8v2.8h-2.8zM998.1 590.2h2.8v2.8h-2.8zM1004.7 590.9h2.8v2.8h-2.8zM1001.6 594.0h2.8v2.8h-2.8zM989.9 590.4h2.8v2.8h-2.8zM1015.1 587.9h2.8v2.8h-2.8zM1000.0 590.0h2.8v2.8h-2.8zM991.7 590.8h2.8v2.8h-2.8zM1049.8 587.7h2.8v2.8h-2.8zM1048.6 591.6h2.8v2.8h-2.8zM1019.4 588.1h2.8v2.8h-2.8zM1046.2 585.3h2.8v2.8h-2.8zM1043.6 585.7h2.8v2.8h-2.8zM1021.9 589.2h2.8v2.8h-2.8zM1025.7 586.2h2.8v2.8h-2.8zM1045.9 582.4h2.8v2.8h-2.8zM1017.0 590.7h2.8v2.8h-2.8zM1030.8 589.8h2.8v2.8h-2.8zM1019.7 592.4h2.8v2.8h-2.8zM1021.9 588.8h2.8v2.8h-2.8zM1018.9 595.3h2.8v2.8h-2.8zM1021.3 592.0h2.8v2.8h-2.8zM1041.7 588.2h2.8v2.8h-2.8zM1046.1 585.5h2.8v2.8h-2.8zM1045.9 587.6h2.8v2.8h-2.8zM1029.4 588.5h2.8v2.8h-2.8zM1021.2 591.0h2.8v2.8h-2.8zM1050.7 585.1h2.8v2.8h-2.8zM1028.0 588.7h2.8v2.8h-2.8zM1045.4 588.6h2.8v2.8h-2.8zM1038.9 587.1h2.8v2.8h-2.8zM1042.2 588.4h2.8v2.8h-2.8zM1023.1 591.6h2.8v2.8h-2.8zM1027.8 589.0h2.8v2.8h-2.8zM1046.2 587.1h2.8v2.8h-2.8zM1050.7 587.4h2.8v2.8h-2.8zM1040.5 586.3h2.8v2.8h-2.8zM1032.7 587.2h2.8v2.8h-2.8zM1018.8 587.5h2.8v2.8h-2.8zM1037.0 587.4h2.8v2.8h-2.8zM1013.2 584.7h2.8v2.8h-2.8zM1021.1 592.6h2.8v2.8h-2.8zM1018.9 586.7h2.8v2.8h-2.8zM1019.1 590.7h2.8v2.8h-2.8zM1040.8 586.5h2.8v2.8h-2.8zM1017.0 585.2h2.8v2.8h-2.8zM952.6 608.6h2.8v2.8h-2.8zM1021.6 605.6h2.8v2.8h-2.8z"/>
<path fill="#1a1aff" d="M929.6 27.6h2.8v2.8h-2.8zM931.6 29.1h2.8v2.8h-2.8zM937.6 24.1h2.8v2.8h-2.8zM945.1 24.6h2.8v2.8h-2.8zM987.6 140.1h2.8v2.8h-2.8zM843.6 153.6h2.8v2.8h-2.8zM851.6 154.1h2.8v2.8h-2.8zM859.6 150.6h2.8v2.8h-2.8zM863.6 151.1h2.8v2.8h-2.8zM870.6 147.6h2.8v2.8h-2.8zM878.6 148.1h2.8v2.8h-2.8zM888.6 153.1h2.8v2.8h-2.8zM895.6 154.1h2.8v2.8h-2.8zM884.6 160.1h2.8v2.8h-2.8zM1006.6 148.1h2.8v2.8h-2.8zM989.6 154.6h2.8v2.8h-2.8zM997.6 156.1h2.8v2.8h-2.8zM1013.6 152.6h2.8v2.8h-2.8zM1020.6 153.1h2.8v2.8h-2.8zM1040.6 150.1h2.8v2.8h-2.8zM1043.6 157.6h2.8v2.8h-2.8zM900.6 168.1h2.8v2.8h-2.8zM843.6 172.1h2.8v2.8h-2.8zM851.6 168.6h2.8v2.8h-2.8zM854.6 172.6h2.8v2.8h-2.8zM862.6 170.6h2.8v2.8h-2.8zM870.6 170.6h2.8v2.8h-2.8zM874.6 166.6h2.8v2.8h-2.8zM881.6 178.1h2.8v2.8h-2.8zM842.6 191.2h2.8v2.8h-2.8zM844.1 190.5h2.8v2.8h-2.8zM842.8 230.4h2.8v2.8h-2.8zM844.2 229.7h2.8v2.8h-2.8zM831.1 211.8h2.8v2.8h-2.8zM830.8 213.5h2.8v2.8h-2.8zM833.0 218.2h2.8v2.8h-2.8zM994.6 180.6h2.8v2.8h-2.8zM1001.6 177.6h2.8v2.8h-2.8zM1043.0 192.2h2.8v2.8h-2.8zM1046.0 192.5h2.8v2.8h-2.8zM1047.2 191.6h2.8v2.8h-2.8zM1035.1 209.6h2.8v2.8h-2.8zM1031.5 210.6h2.8v2.8h-2.8zM1026.2 207.8h2.8v2.8h-2.8zM1043.1 223.4h2.8v2.8h-2.8zM1045.1 222.6h2.8v2.8h-2.8zM1046.6 221.6h2.8v2.8h-2.8zM1050.6 225.6h2.8v2.8h-2.8zM1044.5 248.8h2.8v2.8h-2.8zM1046.8 248.2h2.8v2.8h-2.8zM894.5 210.9h2.8v2.8h-2.8zM905.9 210.6h2.8v2.8h-2.8zM921.9 211.7h2.8v2.8h-2.8zM925.4 211.4h2.8v2.8h-2.8zM944.2 211.6h2.8v2.8h-2.8zM949.8 211.8h2.8v2.8h-2.8zM952.8 211.9h2.8v2.8h-2.8zM955.7 210.7h2.8v2.8h-2.8zM977.5 211.8h2.8v2.8h-2.8zM983.9 212.3h2.8v2.8h-2.8zM1017.1 212.1h2.8v2.8h-2.8zM1021.1 211.7h2.8v2.8h-2.8zM1028.4 211.3h2.8v2.8h-2.8zM1032.4 211.7h2.8v2.8h-2.8zM850.3 269.5h2.8v2.8h-2.8zM853.9 271.0h2.8v2.8h-2.8zM877.6 269.1h2.8v2.8h-2.8zM881.3 269.5h2.8v2.8h-2.8zM887.4 268.2h2.8v2.8h-2.8zM890.4 267.8h2.8v2.8h-2.8zM891.6 269.1h2.8v2.8h-2.8zM899.4 267.5h2.8v2.8h-2.8zM902.9 267.0h2.8v2.8h-2.8zM908.6 268.1h2.8v2.8h-2.8zM913.4 268.3h2.8v2.8h-2.8zM917.7 268.6h2.8v2.8h-2.8zM921.2 268.6h2.8v2.8h-2.8zM926.5 267.9h2.8v2.8h-2.8zM941.4 268.3h2.8v2.8h-2.8zM944.9 268.3h2.8v2.8h-2.8zM963.2 268.5h2.8v2.8h-2.8zM976.0 268.5h2.8v2.8h-2.8zM980.0 269.0h2.8v2.8h-2.8zM979.8 268.5h2.8v2.8h-2.8zM983.8 268.2h2.8v2.8h-2.8zM995.1 268.7h2.8v2.8h-2.8zM998.1 269.2h2.8v2.8h-2.8zM999.3 269.1h2.8v2.8h-2.8zM1016.5 273.6h2.8v2.8h-2.8zM1024.5 276.7h2.8v2.8h-2.8zM832.1 271.5h2.8v2.8h-2.8zM824.5 271.5h2.8v2.8h-2.8zM814.8 271.1h2.8v2.8h-2.8zM834.5 271.3h2.8v2.8h-2.8zM838.5 272.0h2.8v2.8h-2.8zM811.1 271.0h2.8v2.8h-2.8zM820.2 274.3h2.8v2.8h-2.8zM841.7 274.6h2.8v2.8h-2.8zM801.8 275.2h2.8v2.8h-2.8zM806.3 274.5h2.8v2.8h-2.8zM816.8 274.3h2.8v2.8h-2.8zM820.8 277.6h2.8v2.8h-2.8zM820.4 277.4h2.8v2.8h-2.8zM838.2 277.3h2.8v2.8h-2.8zM1069.7 268.5h2.8v2.8h-2.8zM1040.7 268.3h2.8v2.8h-2.8zM1037.8 268.6h2.8v2.8h-2.8zM1061.1 271.8h2.8v2.8h-2.8zM1028.8 271.8h2.8v2.8h-2.8zM1079.9 271.7h2.8v2.8h-2.8zM1036.0 274.3h2.8v2.8h-2.8zM849.6 275.6h2.8v2.8h-2.8zM848.6 289.6h2.8v2.8h-2.8zM847.6 294.6h2.8v2.8h-2.8zM847.6 304.6h2.8v2.8h-2.8zM846.6 312.6h2.8v2.8h-2.8zM846.6 319.6h2.8v2.8h-2.8zM845.6 331.6h2.8v2.8h-2.8zM845.6 335.6h2.8v2.8h-2.8zM844.6 341.6h2.8v2.8h-2.8zM844.6 345.6h2.8v2.8h-2.8zM834.6 301.6h2.8v2.8h-2.8zM838.6 303.6h2.8v2.8h-2.8zM843.6 300.6h2.8v2.8h-2.8zM844.4 345.0h2.8v2.8h-2.8zM845.6 360.4h2.8v2.8h-2.8zM845.3 359.9h2.8v2.8h-2.8zM843.0 367.5h2.8v2.8h-2.8zM844.6 379.1h2.8v2.8h-2.8zM845.3 381.7h2.8v2.8h-2.8zM843.9 384.1h2.8v2.8h-2.8zM844.6 384.3h2.8v2.8h-2.8zM845.2 386.6h2.8v2.8h-2.8zM846.0 390.6h2.8v2.8h-2.8zM846.0 392.3h2.8v2.8h-2.8zM1043.3 343.9h2.8v2.8h-2.8zM1046.2 344.5h2.8v2.8h-2.8zM1044.2 347.9h2.8v2.8h-2.8zM1045.8 351.5h2.8v2.8h-2.8zM1048.1 353.1h2.8v2.8h-2.8zM1046.2 356.6h2.8v2.8h-2.8zM1044.5 359.2h2.8v2.8h-2.8zM1046.3 359.7h2.8v2.8h-2.8zM1046.2 363.9h2.8v2.8h-2.8zM1048.9 364.3h2.8v2.8h-2.8zM1044.7 367.3h2.8v2.8h-2.8zM1047.5 367.8h2.8v2.8h-2.8zM1043.0 371.3h2.8v2.8h-2.8zM1046.5 372.8h2.8v2.8h-2.8zM1044.9 375.7h2.8v2.8h-2.8zM1049.2 376.2h2.8v2.8h-2.8zM1044.4 379.6h2.8v2.8h-2.8zM1046.4 379.7h2.8v2.8h-2.8zM1048.4 379.9h2.8v2.8h-2.8zM1047.7 384.8h2.8v2.8h-2.8zM1043.8 388.0h2.8v2.8h-2.8zM1046.8 388.0h2.8v2.8h-2.8zM1048.2 388.8h2.8v2.8h-2.8zM1047.9 392.5h2.8v2.8h-2.8zM1050.3 393.0h2.8v2.8h-2.8zM1044.2 395.4h2.8v2.8h-2.8zM1046.0 395.8h2.8v2.8h-2.8zM1048.1 395.6h2.8v2.8h-2.8zM1044.4 398.8h2.8v2.8h-2.8zM1048.8 400.8h2.8v2.8h-2.8zM1047.5 404.2h2.8v2.8h-2.8zM1049.7 403.8h2.8v2.8h-2.8zM1049.8 407.6h2.8v2.8h-2.8zM1049.4 412.3h2.8v2.8h-2.8zM1050.8 412.6h2.8v2.8h-2.8zM1048.1 419.9h2.8v2.8h-2.8zM1051.0 419.7h2.8v2.8h-2.8zM1051.0 424.3h2.8v2.8h-2.8zM1050.6 428.5h2.8v2.8h-2.8zM1050.4 432.8h2.8v2.8h-2.8zM1049.9 436.0h2.8v2.8h-2.8zM1051.4 435.8h2.8v2.8h-2.8zM1051.1 440.8h2.8v2.8h-2.8zM1051.2 444.8h2.8v2.8h-2.8zM1051.9 449.0h2.8v2.8h-2.8zM1049.8 456.6h2.8v2.8h-2.8zM1052.3 456.3h2.8v2.8h-2.8zM1051.0 464.0h2.8v2.8h-2.8zM1050.8 468.9h2.8v2.8h-2.8zM1050.9 472.7h2.8v2.8h-2.8zM1049.5 476.5h2.8v2.8h-2.8zM1052.2 476.1h2.8v2.8h-2.8zM1051.3 479.9h2.8v2.8h-2.8zM1050.6 590.6h2.8v2.8h-2.8zM1051.6 586.6h2.8v2.8h-2.8z"/>
<path fill="#7a18f0" d="M941.1 21.1h2.8v2.8h-2.8zM948.6 21.6h2.8v2.8h-2.8zM1019.6 167.6h2.8v2.8h-2.8zM1022.6 169.6h2.8v2.8h-2.8zM1026.6 170.6h2.8v2.8h-2.8zM1031.6 170.6h2.8v2.8h-2.8zM991.6 168.6h2.8v2.8h-2.8zM1010.6 170.6h2.8v2.8h-2.8zM1042.6 176.6h2.8v2.8h-2.8zM1048.6 175.6h2.8v2.8h-2.8zM1041.1 212.2h2.8v2.8h-2.8zM1036.9 212.3h2.8v2.8h-2.8zM883.3 211.7h2.8v2.8h-2.8zM888.8 211.2h2.8v2.8h-2.8zM900.0 211.4h2.8v2.8h-2.8zM903.5 211.2h2.8v2.8h-2.8zM910.5 211.5h2.8v2.8h-2.8zM916.7 211.8h2.8v2.8h-2.8zM919.7 212.1h2.8v2.8h-2.8zM927.8 210.9h2.8v2.8h-2.8zM932.5 211.5h2.8v2.8h-2.8zM938.7 212.0h2.8v2.8h-2.8zM962.5 210.9h2.8v2.8h-2.8zM968.1 211.1h2.8v2.8h-2.8zM972.7 212.5h2.8v2.8h-2.8zM976.2 212.4h2.8v2.8h-2.8zM990.2 212.0h2.8v2.8h-2.8zM993.2 212.0h2.8v2.8h-2.8zM995.1 209.7h2.8v2.8h-2.8zM1000.1 210.0h2.8v2.8h-2.8zM1005.4 210.5h2.8v2.8h-2.8zM1011.9 212.6h2.8v2.8h-2.8zM1023.6 212.6h2.8v2.8h-2.8zM844.8 213.0h2.8v2.8h-2.8zM847.8 212.9h2.8v2.8h-2.8zM851.1 212.9h2.8v2.8h-2.8zM854.1 213.3h2.8v2.8h-2.8zM856.8 213.1h2.8v2.8h-2.8zM859.8 212.8h2.8v2.8h-2.8zM862.0 211.1h2.8v2.8h-2.8zM868.6 209.4h2.8v2.8h-2.8zM874.3 207.2h2.8v2.8h-2.8zM858.9 269.9h2.8v2.8h-2.8zM863.2 270.7h2.8v2.8h-2.8zM866.7 271.1h2.8v2.8h-2.8zM869.4 269.5h2.8v2.8h-2.8zM873.4 269.2h2.8v2.8h-2.8zM872.2 268.9h2.8v2.8h-2.8zM875.7 268.9h2.8v2.8h-2.8zM896.4 269.2h2.8v2.8h-2.8zM904.1 268.8h2.8v2.8h-2.8zM907.6 268.4h2.8v2.8h-2.8zM922.4 268.5h2.8v2.8h-2.8zM925.9 268.3h2.8v2.8h-2.8zM931.1 268.1h2.8v2.8h-2.8zM936.3 267.9h2.8v2.8h-2.8zM939.8 268.3h2.8v2.8h-2.8zM945.2 266.9h2.8v2.8h-2.8zM948.2 267.5h2.8v2.8h-2.8zM948.3 267.6h2.8v2.8h-2.8zM954.7 267.0h2.8v2.8h-2.8zM959.0 268.0h2.8v2.8h-2.8zM968.0 268.0h2.8v2.8h-2.8zM972.9 269.2h2.8v2.8h-2.8zM985.0 269.8h2.8v2.8h-2.8zM990.0 269.5h2.8v2.8h-2.8zM1003.1 268.8h2.8v2.8h-2.8zM1007.5 271.4h2.8v2.8h-2.8zM1013.1 269.7h2.8v2.8h-2.8zM1017.1 269.5h2.8v2.8h-2.8zM1019.4 274.9h2.8v2.8h-2.8zM856.7 274.9h2.8v2.8h-2.8zM859.7 274.8h2.8v2.8h-2.8zM860.8 273.8h2.8v2.8h-2.8zM865.2 274.0h2.8v2.8h-2.8zM871.5 273.2h2.8v2.8h-2.8zM874.6 274.2h2.8v2.8h-2.8zM878.1 274.7h2.8v2.8h-2.8zM880.1 273.2h2.8v2.8h-2.8zM885.2 273.4h2.8v2.8h-2.8zM888.7 272.8h2.8v2.8h-2.8zM890.5 274.1h2.8v2.8h-2.8zM894.8 273.1h2.8v2.8h-2.8zM899.7 272.8h2.8v2.8h-2.8zM902.7 272.5h2.8v2.8h-2.8zM903.5 273.8h2.8v2.8h-2.8zM908.1 273.9h2.8v2.8h-2.8zM912.6 272.4h2.8v2.8h-2.8zM917.3 272.2h2.8v2.8h-2.8zM921.6 271.9h2.8v2.8h-2.8zM925.6 272.3h2.8v2.8h-2.8zM926.4 272.3h2.8v2.8h-2.8zM932.0 272.6h2.8v2.8h-2.8zM936.5 273.4h2.8v2.8h-2.8zM941.9 273.4h2.8v2.8h-2.8zM945.9 273.2h2.8v2.8h-2.8zM946.6 272.6h2.8v2.8h-2.8zM950.6 272.8h2.8v2.8h-2.8zM951.3 273.3h2.8v2.8h-2.8zM954.7 272.7h2.8v2.8h-2.8zM960.5 271.9h2.8v2.8h-2.8zM964.0 272.2h2.8v2.8h-2.8zM965.5 272.4h2.8v2.8h-2.8zM969.0 273.3h2.8v2.8h-2.8zM974.5 272.1h2.8v2.8h-2.8zM979.8 272.6h2.8v2.8h-2.8zM983.5 272.6h2.8v2.8h-2.8zM988.1 274.5h2.8v2.8h-2.8zM993.1 273.7h2.8v2.8h-2.8zM997.6 273.6h2.8v2.8h-2.8zM1001.6 273.8h2.8v2.8h-2.8zM1001.9 274.6h2.8v2.8h-2.8zM1006.6 275.6h2.8v2.8h-2.8zM1012.6 276.9h2.8v2.8h-2.8zM1015.6 276.5h2.8v2.8h-2.8zM1015.2 278.3h2.8v2.8h-2.8zM1020.0 281.0h2.8v2.8h-2.8zM1028.6 281.6h2.8v2.8h-2.8zM1036.6 281.6h2.8v2.8h-2.8zM1042.6 285.6h2.8v2.8h-2.8zM1046.6 285.6h2.8v2.8h-2.8zM1041.6 292.6h2.8v2.8h-2.8zM1043.6 297.6h2.8v2.8h-2.8zM1043.6 304.6h2.8v2.8h-2.8zM1051.6 301.6h2.8v2.8h-2.8zM1056.6 305.6h2.8v2.8h-2.8zM1045.6 312.6h2.8v2.8h-2.8zM1055.6 313.6h2.8v2.8h-2.8zM1062.6 313.6h2.8v2.8h-2.8zM1045.6 320.6h2.8v2.8h-2.8zM1048.6 324.6h2.8v2.8h-2.8zM1043.6 335.6h2.8v2.8h-2.8zM1032.6 282.6h2.8v2.8h-2.8zM1039.6 288.6h2.8v2.8h-2.8zM1044.6 336.6h2.8v2.8h-2.8z"/>
<path fill="#ff10ff" d="M935.6 17.6h2.8v2.8h-2.8zM943.6 18.1h2.8v2.8h-2.8zM951.6 18.6h2.8v2.8h-2.8zM956.6 14.1h2.8v2.8h-2.8zM959.6 18.6h2.8v2.8h-2.8z"/>
<g shape-rendering="auto" stroke-linecap="butt"><path d="M884.3 508 L920.5 509.6" stroke="#00f400" stroke-width="3.2"/><path d="M922.4 473.5 L920.4 509" stroke="#ee0000" stroke-width="3.2"/><path d="M920 508 L926.5 514.8" stroke="#000" stroke-width="3.2"/><circle cx="926.6" cy="515.6" r="2.2" fill="#0000f0"/></g>
</svg></div>
</body>
</html>
